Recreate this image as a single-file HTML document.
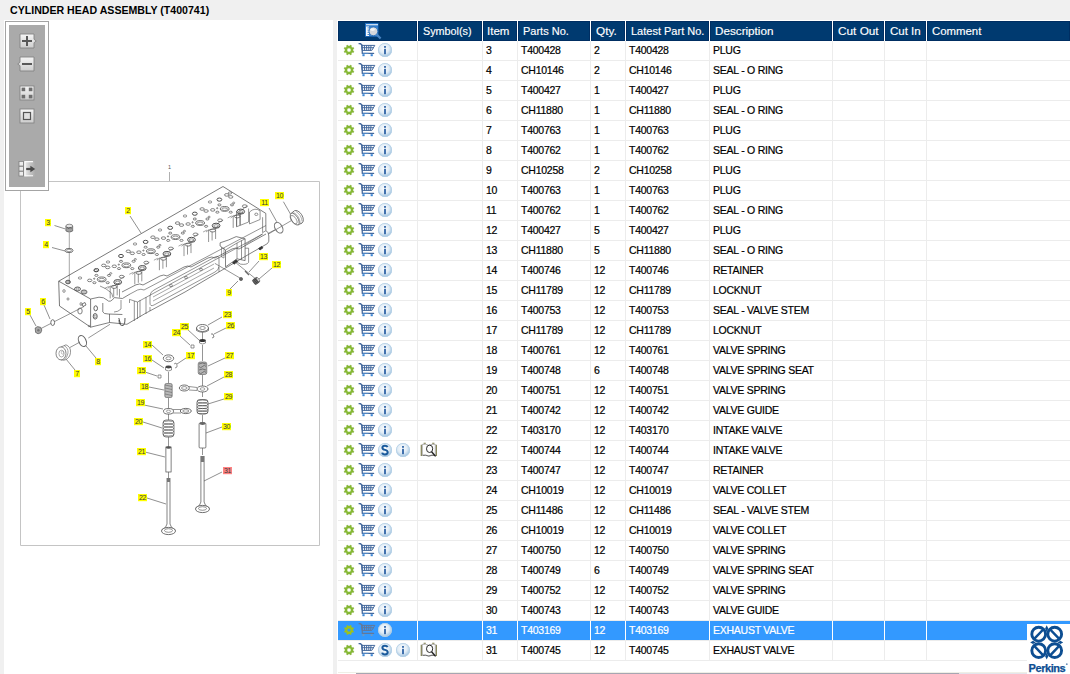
<!DOCTYPE html><html><head><meta charset="utf-8"><style>
*{margin:0;padding:0;box-sizing:border-box}
html,body{width:1070px;height:674px;overflow:hidden;background:#f0f0f0;font-family:"Liberation Sans",sans-serif;position:relative}
.a{position:absolute}
#title{left:10px;top:2px;font-weight:bold;font-size:10.6px;line-height:16px;color:#000;white-space:nowrap}
#lp{left:4px;top:20px;width:329px;height:654px;background:#fff}
#rp{left:337px;top:20px;width:733px;height:654px;background:#fff}
.hd{-webkit-text-stroke:0.15px #fff;top:21px;height:20px;background:#003a70;box-shadow:inset 0 0 0 1px #002e62;color:#fff;font-size:10.8px;line-height:20px;padding-left:5px;white-space:nowrap}
.vl{top:41px;width:1px;height:620px;background:#ececec}
.hl{left:338px;width:732px;height:1px;background:#ececec}
.tx{font-size:10.5px;letter-spacing:-0.25px;-webkit-text-stroke:0.2px currentColor;line-height:19px;height:19px;color:#000;white-space:nowrap}
.sel{left:338px;width:732px;height:19px;background:#3399ff}
.ic{width:16px;height:16px}
</style></head><body>
<div class="a" id="title">CYLINDER HEAD ASSEMBLY (T400741)</div>
<div class="a" id="lp"></div>
<div class="a" id="rp"></div>
<svg class="a" style="left:0;top:0" width="333" height="674" viewBox="0 0 333 674"><path d="M49,181.5 H319.5 V545.5 H20.5 V191" stroke="#c4c4c4" stroke-width="1" fill="none"/>
<path d="M169.5,172 L169.5,181" stroke="#b0b0b0" stroke-width="1" fill="none"/>
<text x="169.5" y="168.5" font-size="5.5" text-anchor="middle" fill="#555" font-family="Liberation Sans">1</text>
<path d="M130,216 L141,233" stroke="#606060" stroke-width="0.7" fill="none"/>
<path d="M54.5,225.5 L65.5,229" stroke="#606060" stroke-width="0.7" fill="none"/>
<path d="M52,247.5 L65,251" stroke="#606060" stroke-width="0.7" fill="none"/>
<path d="M283.4,201.7 L290.7,214.4" stroke="#606060" stroke-width="0.7" fill="none"/>
<path d="M269,208 L276.7,221.7" stroke="#606060" stroke-width="0.7" fill="none"/>
<path d="M259,261 L249,272" stroke="#606060" stroke-width="0.7" fill="none"/>
<path d="M272,268 L259,279" stroke="#606060" stroke-width="0.7" fill="none"/>
<path d="M230,289 L238,281" stroke="#606060" stroke-width="0.7" fill="none"/>
<path d="M44,305 L50,319" stroke="#606060" stroke-width="0.7" fill="none"/>
<path d="M30,315 L36,326" stroke="#606060" stroke-width="0.7" fill="none"/>
<path d="M96,358 L86,346" stroke="#606060" stroke-width="0.7" fill="none"/>
<path d="M75,370 L66,359" stroke="#606060" stroke-width="0.7" fill="none"/>
<path d="M152,345 L163,355" stroke="#606060" stroke-width="0.7" fill="none"/>
<path d="M152,360 L164,368" stroke="#606060" stroke-width="0.7" fill="none"/>
<path d="M145,372 L157,376" stroke="#606060" stroke-width="0.7" fill="none"/>
<path d="M180,336 L190,345" stroke="#606060" stroke-width="0.7" fill="none"/>
<path d="M222,317 L208,325" stroke="#606060" stroke-width="0.7" fill="none"/>
<path d="M226,328 L214,334" stroke="#606060" stroke-width="0.7" fill="none"/>
<path d="M187,329 L199,340" stroke="#606060" stroke-width="0.7" fill="none"/>
<path d="M186,358 L177,364" stroke="#606060" stroke-width="0.7" fill="none"/>
<path d="M225,358 L208,366" stroke="#606060" stroke-width="0.7" fill="none"/>
<path d="M224,377 L207,386" stroke="#606060" stroke-width="0.7" fill="none"/>
<path d="M224,399 L208,404" stroke="#606060" stroke-width="0.7" fill="none"/>
<path d="M149,387 L164,390" stroke="#606060" stroke-width="0.7" fill="none"/>
<path d="M144,405 L163,409" stroke="#606060" stroke-width="0.7" fill="none"/>
<path d="M143,422 L162,428" stroke="#606060" stroke-width="0.7" fill="none"/>
<path d="M145,452 L165,457" stroke="#606060" stroke-width="0.7" fill="none"/>
<path d="M147,498 L166,504" stroke="#606060" stroke-width="0.7" fill="none"/>
<path d="M222,427 L206,433" stroke="#606060" stroke-width="0.7" fill="none"/>
<path d="M222,472 L204,481" stroke="#606060" stroke-width="0.7" fill="none"/>
<path d="M58.7,281.2 L223,186.5 L265.8,213.4" stroke="#4e4e4e" stroke-width="0.75" fill="none"/>
<path d="M58.7,281.2 L90.6,299" stroke="#4e4e4e" stroke-width="0.75" fill="none"/>
<path d="M58.7,281.2 L59.5,306 L90.6,327.2 L90.6,299" stroke="#4e4e4e" stroke-width="0.75" fill="none"/>
<path d="M90.6,299 L99,297.2 Q104,297 107,300 Q110,303.5 114.4,297.6 L122.4,298.5 L130,294" stroke="#4e4e4e" stroke-width="0.7" fill="none"/>
<path d="M122,292 L136,284.8 Q140,283 143,285 L160,276 Q164,274 167,276 L184,267 Q188,265 191,267 L208,258 Q212,256 215,258 L232,249 Q236,247 239,249 L266,234" stroke="#4e4e4e" stroke-width="0.7" fill="none"/>
<path d="M130,294 L137.5,290 Q141,288.5 144,290 L266,225.5" stroke="#4e4e4e" stroke-width="0.6" fill="none"/>
<path d="M137.5,302 L262.6,234" stroke="#4e4e4e" stroke-width="0.6" fill="none"/>
<path d="M100,286 Q106,288 111.7,293.2 L113,297.6 M119.5,297.5 L119.5,289" stroke="#4e4e4e" stroke-width="0.6" fill="none"/>
<path d="M265.8,213.4 L265.9,230.7 Q269,232 268.8,236 L268.8,241.3 Q268,244 265,245 L248.6,254.4" stroke="#4e4e4e" stroke-width="0.7" fill="none"/>
<path d="M262.6,217.2 L262.6,232.6 L265.9,230.7 M246,244.1 L262.6,234" stroke="#4e4e4e" stroke-width="0.6" fill="none"/>
<path d="M267.9,233.6 L275,229.7" stroke="#4e4e4e" stroke-width="0.6" fill="none"/>
<path d="M258.6,248.6 l3,-2.2 l1.4,1.4 l-3,2.2 Z" fill="#333" stroke="#333" stroke-width="0.8"/>
<path d="M145,313.6 L185,292 L248.6,254.4" stroke="#4e4e4e" stroke-width="0.7" fill="none"/>
<path d="M102.8,303 L102.8,311.9 Q103.5,314 108.2,314 L122.4,314.5" stroke="#4e4e4e" stroke-width="0.7" fill="none"/>
<path d="M109.5,314 L109.5,322.5 M90.6,327.2 L109.5,322.5 L126.9,324.3 L145,313.6" stroke="#4e4e4e" stroke-width="0.7" fill="none"/>
<path d="M121,300 L121,309 Q118,312 114,312" stroke="#4e4e4e" stroke-width="0.6" fill="none"/>
<path d="M129.5,299.4 L137.5,302 L137.5,319 M134.3,301 L134.3,321 M129.5,299.4 L129.5,303" stroke="#4e4e4e" stroke-width="0.6" fill="none"/>
<path d="M119,320 Q119,326 123,325.5 Q125,325 125,318 M118.8,318 L120.5,324" stroke="#444" stroke-width="0.9" fill="none"/>
<path d="M150,296 Q150,292 154,290 L215,257 Q219,255 219,259 L219,266 Q219,270 215,272 L154,305 Q150,307 150,303 Z" stroke="#4e4e4e" stroke-width="0.6" fill="none"/>
<path d="M153,297 L214,264 M153,301 L214,268" stroke="#4e4e4e" stroke-width="0.5" fill="none"/>
<path d="M140,300 L140,317 M146,297 L146,314" stroke="#4e4e4e" stroke-width="0.6" fill="none"/>
<ellipse cx="171" cy="285.6" rx="1.6" ry="1" stroke="#4e4e4e" stroke-width="0.6" fill="none"/>
<ellipse cx="186" cy="277.5" rx="1.6" ry="1" stroke="#4e4e4e" stroke-width="0.6" fill="none"/>
<ellipse cx="201" cy="269.4" rx="1.6" ry="1" stroke="#4e4e4e" stroke-width="0.6" fill="none"/>
<path d="M150,311 L150,307 M219,272 L219,267" stroke="#4e4e4e" stroke-width="0.6" fill="none"/>
<path d="M220.1,242.8 L228.2,240.1 L236.2,236.6 L245.1,238.8 L245.1,260.6 L237,258.8 L225.5,266.9 L225.5,250 L220.1,246 Z" stroke="#4e4e4e" stroke-width="0.7" fill="none"/>
<path d="M225.5,250 L237,243 L245.1,238.8 M237,243 L237,258.8 M241.5,240.5 L241.5,259.5" stroke="#4e4e4e" stroke-width="0.6" fill="none"/>
<path d="M245.1,248.2 L248.6,248.2 L248.6,262.4 Q247,265 240.6,264.2 L237,262" stroke="#4e4e4e" stroke-width="0.6" fill="none"/>
<path d="M221.5,247 L221.5,257 L224,258 L224,248" stroke="#4e4e4e" stroke-width="0.5" fill="none"/>
<path d="M232.6,262.6 l3.6,-2.8 l1.4,1.6 l-3.6,2.8 Z" fill="#333" stroke="#333" stroke-width="0.9"/>
<path d="M234.4,261.5 L258.4,281.1" stroke="#4e4e4e" stroke-width="0.6" fill="none"/>
<path d="M214.8,263.3 L240.6,278.4" stroke="#4e4e4e" stroke-width="0.6" fill="none"/>
<path d="M236.5,211 L236.5,226.8 L248.6,222 L248.6,208.5 M240,209.5 L240,225.5" stroke="#4e4e4e" stroke-width="0.6" fill="none"/>
<path d="M249.5,212 L249.5,223.9 L260.1,219.5 L260.1,210.9 Q255,207 249.5,212" stroke="#4e4e4e" stroke-width="0.6" fill="none"/>
<ellipse cx="256.3" cy="214.3" rx="1.6" ry="1.2" stroke="#4e4e4e" stroke-width="0.6" fill="none"/>
<ellipse cx="64" cy="291" rx="1.2" ry="1.4" stroke="#4e4e4e" stroke-width="0.6" fill="none"/>
<ellipse cx="68" cy="299" rx="1" ry="1.2" stroke="#4e4e4e" stroke-width="0.6" fill="none"/>
<ellipse cx="80" cy="311" rx="2.2" ry="3" stroke="#4e4e4e" stroke-width="0.7" fill="none"/>
<ellipse cx="81" cy="304" rx="1" ry="1.5" stroke="#4e4e4e" stroke-width="0.6" fill="none"/>
<ellipse cx="95.7" cy="308.3" rx="1.8" ry="2.5" stroke="#4e4e4e" stroke-width="0.9" fill="none"/>
<ellipse cx="95.2" cy="316.3" rx="2" ry="2.8" stroke="#4e4e4e" stroke-width="0.9" fill="none"/>
<ellipse cx="95.2" cy="316.3" rx="1" ry="1.5" stroke="#4e4e4e" stroke-width="0.5" fill="none"/>
<ellipse cx="89" cy="326" rx="0.8" ry="0.8" stroke="#4e4e4e" stroke-width="0.5" fill="none"/>
<ellipse cx="77.5" cy="289" rx="3" ry="2" stroke="#4e4e4e" stroke-width="0.9" fill="none"/>
<ellipse cx="84" cy="292" rx="3" ry="2" stroke="#4e4e4e" stroke-width="0.9" fill="none"/>
<ellipse cx="77.5" cy="289" rx="1.6" ry="1" stroke="#4e4e4e" stroke-width="0.5" fill="none"/>
<ellipse cx="84" cy="292" rx="1.6" ry="1" stroke="#4e4e4e" stroke-width="0.5" fill="none"/>
<ellipse cx="68" cy="282" rx="2.4" ry="1.8" stroke="#4e4e4e" stroke-width="0.9" fill="#bbb"/>
<ellipse cx="101.7" cy="279.4" rx="4.4" ry="2.4" stroke="#4e4e4e" stroke-width="0.8" fill="none"/>
<ellipse cx="101.7" cy="279.7" rx="3" ry="1.3" stroke="#4e4e4e" stroke-width="0.6" fill="none"/>
<ellipse cx="96.4" cy="275.4" rx="1.6" ry="1" stroke="#4e4e4e" stroke-width="0.7" fill="none"/>
<ellipse cx="109.0" cy="275.4" rx="1.6" ry="1" stroke="#4e4e4e" stroke-width="0.7" fill="none"/>
<ellipse cx="94.4" cy="282.7" rx="1.6" ry="1" stroke="#4e4e4e" stroke-width="0.7" fill="none"/>
<ellipse cx="107.7" cy="282.7" rx="1.6" ry="1" stroke="#4e4e4e" stroke-width="0.7" fill="none"/>
<ellipse cx="94.2" cy="278.7" rx="0.6" ry="0.6" stroke="#4e4e4e" stroke-width="0.7" fill="none"/>
<ellipse cx="96.4" cy="270.09999999999997" rx="2.4" ry="1.6" stroke="#4e4e4e" stroke-width="1.0" fill="none"/>
<ellipse cx="103.7" cy="265.4" rx="2.2" ry="1.3" stroke="#4e4e4e" stroke-width="0.7" fill="none"/>
<ellipse cx="107.7" cy="267.4" rx="2.2" ry="1.3" stroke="#4e4e4e" stroke-width="0.7" fill="none"/>
<ellipse cx="117.7" cy="282.09999999999997" rx="3.9" ry="2.5" stroke="#4e4e4e" stroke-width="1.0" fill="none"/>
<ellipse cx="117.7" cy="282.4" rx="2.4" ry="1.3" stroke="#4e4e4e" stroke-width="0.6" fill="none"/>
<ellipse cx="121.7" cy="276.7" rx="2.4" ry="1.4" stroke="#4e4e4e" stroke-width="0.7" fill="none"/>
<ellipse cx="89.7" cy="280.4" rx="2.2" ry="1.3" stroke="#4e4e4e" stroke-width="0.7" fill="none"/>
<ellipse cx="110.7" cy="273.4" rx="1.1" ry="0.8" stroke="#4e4e4e" stroke-width="0.6" fill="none"/>
<path d="M110.2,286.4 L110.2,298.4 M117.2,284.4 L117.2,295.4 M113.7,287.9 L113.7,296.9" stroke="#4e4e4e" stroke-width="0.6" fill="none"/>
<path d="M107.7,288.4 Q109.7,285.4 113.7,285.9 L119.7,282.9" stroke="#4e4e4e" stroke-width="0.6" fill="none"/>
<ellipse cx="114.2" cy="286.9" rx="2.8" ry="1.5" stroke="#4e4e4e" stroke-width="0.7" fill="none"/>
<path d="M104.7,288.4 L108.7,286.4 M119.7,279.4 L124.7,276.4" stroke="#4e4e4e" stroke-width="0.5" fill="none"/>
<ellipse cx="126.30000000000001" cy="265.29999999999995" rx="4.4" ry="2.4" stroke="#4e4e4e" stroke-width="0.8" fill="none"/>
<ellipse cx="126.30000000000001" cy="265.59999999999997" rx="3" ry="1.3" stroke="#4e4e4e" stroke-width="0.6" fill="none"/>
<ellipse cx="121.00000000000001" cy="261.29999999999995" rx="1.6" ry="1" stroke="#4e4e4e" stroke-width="0.7" fill="none"/>
<ellipse cx="133.60000000000002" cy="261.29999999999995" rx="1.6" ry="1" stroke="#4e4e4e" stroke-width="0.7" fill="none"/>
<ellipse cx="119.00000000000001" cy="268.59999999999997" rx="1.6" ry="1" stroke="#4e4e4e" stroke-width="0.7" fill="none"/>
<ellipse cx="132.3" cy="268.59999999999997" rx="1.6" ry="1" stroke="#4e4e4e" stroke-width="0.7" fill="none"/>
<ellipse cx="118.80000000000001" cy="264.59999999999997" rx="0.6" ry="0.6" stroke="#4e4e4e" stroke-width="0.7" fill="none"/>
<ellipse cx="121.00000000000001" cy="255.99999999999994" rx="2.4" ry="1.6" stroke="#4e4e4e" stroke-width="1.0" fill="none"/>
<ellipse cx="128.3" cy="251.29999999999995" rx="2.2" ry="1.3" stroke="#4e4e4e" stroke-width="0.7" fill="none"/>
<ellipse cx="132.3" cy="253.29999999999995" rx="2.2" ry="1.3" stroke="#4e4e4e" stroke-width="0.7" fill="none"/>
<ellipse cx="142.3" cy="267.99999999999994" rx="3.9" ry="2.5" stroke="#4e4e4e" stroke-width="1.0" fill="none"/>
<ellipse cx="142.3" cy="268.29999999999995" rx="2.4" ry="1.3" stroke="#4e4e4e" stroke-width="0.6" fill="none"/>
<ellipse cx="146.3" cy="262.59999999999997" rx="2.4" ry="1.4" stroke="#4e4e4e" stroke-width="0.7" fill="none"/>
<ellipse cx="114.30000000000001" cy="266.29999999999995" rx="2.2" ry="1.3" stroke="#4e4e4e" stroke-width="0.7" fill="none"/>
<ellipse cx="135.3" cy="259.29999999999995" rx="1.1" ry="0.8" stroke="#4e4e4e" stroke-width="0.6" fill="none"/>
<path d="M134.8,272.29999999999995 L134.8,284.29999999999995 M141.8,270.29999999999995 L141.8,281.29999999999995 M138.3,273.79999999999995 L138.3,282.79999999999995" stroke="#4e4e4e" stroke-width="0.6" fill="none"/>
<path d="M132.3,274.29999999999995 Q134.3,271.29999999999995 138.3,271.79999999999995 L144.3,268.79999999999995" stroke="#4e4e4e" stroke-width="0.6" fill="none"/>
<ellipse cx="138.8" cy="272.79999999999995" rx="2.8" ry="1.5" stroke="#4e4e4e" stroke-width="0.7" fill="none"/>
<path d="M129.3,274.29999999999995 L133.3,272.29999999999995 M144.3,265.29999999999995 L149.3,262.29999999999995" stroke="#4e4e4e" stroke-width="0.5" fill="none"/>
<ellipse cx="150.9" cy="251.2" rx="4.4" ry="2.4" stroke="#4e4e4e" stroke-width="0.8" fill="none"/>
<ellipse cx="150.9" cy="251.5" rx="3" ry="1.3" stroke="#4e4e4e" stroke-width="0.6" fill="none"/>
<ellipse cx="145.6" cy="247.2" rx="1.6" ry="1" stroke="#4e4e4e" stroke-width="0.7" fill="none"/>
<ellipse cx="158.20000000000002" cy="247.2" rx="1.6" ry="1" stroke="#4e4e4e" stroke-width="0.7" fill="none"/>
<ellipse cx="143.6" cy="254.5" rx="1.6" ry="1" stroke="#4e4e4e" stroke-width="0.7" fill="none"/>
<ellipse cx="156.9" cy="254.5" rx="1.6" ry="1" stroke="#4e4e4e" stroke-width="0.7" fill="none"/>
<ellipse cx="143.4" cy="250.5" rx="0.6" ry="0.6" stroke="#4e4e4e" stroke-width="0.7" fill="none"/>
<ellipse cx="145.6" cy="241.89999999999998" rx="2.4" ry="1.6" stroke="#4e4e4e" stroke-width="1.0" fill="none"/>
<ellipse cx="152.9" cy="237.2" rx="2.2" ry="1.3" stroke="#4e4e4e" stroke-width="0.7" fill="none"/>
<ellipse cx="156.9" cy="239.2" rx="2.2" ry="1.3" stroke="#4e4e4e" stroke-width="0.7" fill="none"/>
<ellipse cx="166.9" cy="253.89999999999998" rx="3.9" ry="2.5" stroke="#4e4e4e" stroke-width="1.0" fill="none"/>
<ellipse cx="166.9" cy="254.2" rx="2.4" ry="1.3" stroke="#4e4e4e" stroke-width="0.6" fill="none"/>
<ellipse cx="170.9" cy="248.5" rx="2.4" ry="1.4" stroke="#4e4e4e" stroke-width="0.7" fill="none"/>
<ellipse cx="138.9" cy="252.2" rx="2.2" ry="1.3" stroke="#4e4e4e" stroke-width="0.7" fill="none"/>
<ellipse cx="159.9" cy="245.2" rx="1.1" ry="0.8" stroke="#4e4e4e" stroke-width="0.6" fill="none"/>
<path d="M159.4,258.2 L159.4,270.2 M166.4,256.2 L166.4,267.2 M162.9,259.7 L162.9,268.7" stroke="#4e4e4e" stroke-width="0.6" fill="none"/>
<path d="M156.9,260.2 Q158.9,257.2 162.9,257.7 L168.9,254.7" stroke="#4e4e4e" stroke-width="0.6" fill="none"/>
<ellipse cx="163.4" cy="258.7" rx="2.8" ry="1.5" stroke="#4e4e4e" stroke-width="0.7" fill="none"/>
<path d="M153.9,260.2 L157.9,258.2 M168.9,251.2 L173.9,248.2" stroke="#4e4e4e" stroke-width="0.5" fill="none"/>
<ellipse cx="175.5" cy="237.09999999999997" rx="4.4" ry="2.4" stroke="#4e4e4e" stroke-width="0.8" fill="none"/>
<ellipse cx="175.5" cy="237.39999999999998" rx="3" ry="1.3" stroke="#4e4e4e" stroke-width="0.6" fill="none"/>
<ellipse cx="170.2" cy="233.09999999999997" rx="1.6" ry="1" stroke="#4e4e4e" stroke-width="0.7" fill="none"/>
<ellipse cx="182.8" cy="233.09999999999997" rx="1.6" ry="1" stroke="#4e4e4e" stroke-width="0.7" fill="none"/>
<ellipse cx="168.2" cy="240.39999999999998" rx="1.6" ry="1" stroke="#4e4e4e" stroke-width="0.7" fill="none"/>
<ellipse cx="181.5" cy="240.39999999999998" rx="1.6" ry="1" stroke="#4e4e4e" stroke-width="0.7" fill="none"/>
<ellipse cx="168.0" cy="236.39999999999998" rx="0.6" ry="0.6" stroke="#4e4e4e" stroke-width="0.7" fill="none"/>
<ellipse cx="170.2" cy="227.79999999999995" rx="2.4" ry="1.6" stroke="#4e4e4e" stroke-width="1.0" fill="none"/>
<ellipse cx="177.5" cy="223.09999999999997" rx="2.2" ry="1.3" stroke="#4e4e4e" stroke-width="0.7" fill="none"/>
<ellipse cx="181.5" cy="225.09999999999997" rx="2.2" ry="1.3" stroke="#4e4e4e" stroke-width="0.7" fill="none"/>
<ellipse cx="191.5" cy="239.79999999999995" rx="3.9" ry="2.5" stroke="#4e4e4e" stroke-width="1.0" fill="none"/>
<ellipse cx="191.5" cy="240.09999999999997" rx="2.4" ry="1.3" stroke="#4e4e4e" stroke-width="0.6" fill="none"/>
<ellipse cx="195.5" cy="234.39999999999998" rx="2.4" ry="1.4" stroke="#4e4e4e" stroke-width="0.7" fill="none"/>
<ellipse cx="163.5" cy="238.09999999999997" rx="2.2" ry="1.3" stroke="#4e4e4e" stroke-width="0.7" fill="none"/>
<ellipse cx="184.5" cy="231.09999999999997" rx="1.1" ry="0.8" stroke="#4e4e4e" stroke-width="0.6" fill="none"/>
<path d="M184.0,244.09999999999997 L184.0,256.09999999999997 M191.0,242.09999999999997 L191.0,253.09999999999997 M187.5,245.59999999999997 L187.5,254.59999999999997" stroke="#4e4e4e" stroke-width="0.6" fill="none"/>
<path d="M181.5,246.09999999999997 Q183.5,243.09999999999997 187.5,243.59999999999997 L193.5,240.59999999999997" stroke="#4e4e4e" stroke-width="0.6" fill="none"/>
<ellipse cx="188.0" cy="244.59999999999997" rx="2.8" ry="1.5" stroke="#4e4e4e" stroke-width="0.7" fill="none"/>
<path d="M178.5,246.09999999999997 L182.5,244.09999999999997 M193.5,237.09999999999997 L198.5,234.09999999999997" stroke="#4e4e4e" stroke-width="0.5" fill="none"/>
<ellipse cx="200.10000000000002" cy="222.99999999999997" rx="4.4" ry="2.4" stroke="#4e4e4e" stroke-width="0.8" fill="none"/>
<ellipse cx="200.10000000000002" cy="223.29999999999998" rx="3" ry="1.3" stroke="#4e4e4e" stroke-width="0.6" fill="none"/>
<ellipse cx="194.8" cy="218.99999999999997" rx="1.6" ry="1" stroke="#4e4e4e" stroke-width="0.7" fill="none"/>
<ellipse cx="207.40000000000003" cy="218.99999999999997" rx="1.6" ry="1" stroke="#4e4e4e" stroke-width="0.7" fill="none"/>
<ellipse cx="192.8" cy="226.29999999999998" rx="1.6" ry="1" stroke="#4e4e4e" stroke-width="0.7" fill="none"/>
<ellipse cx="206.10000000000002" cy="226.29999999999998" rx="1.6" ry="1" stroke="#4e4e4e" stroke-width="0.7" fill="none"/>
<ellipse cx="192.60000000000002" cy="222.29999999999998" rx="0.6" ry="0.6" stroke="#4e4e4e" stroke-width="0.7" fill="none"/>
<ellipse cx="194.8" cy="213.69999999999996" rx="2.4" ry="1.6" stroke="#4e4e4e" stroke-width="1.0" fill="none"/>
<ellipse cx="202.10000000000002" cy="208.99999999999997" rx="2.2" ry="1.3" stroke="#4e4e4e" stroke-width="0.7" fill="none"/>
<ellipse cx="206.10000000000002" cy="210.99999999999997" rx="2.2" ry="1.3" stroke="#4e4e4e" stroke-width="0.7" fill="none"/>
<ellipse cx="216.10000000000002" cy="225.69999999999996" rx="3.9" ry="2.5" stroke="#4e4e4e" stroke-width="1.0" fill="none"/>
<ellipse cx="216.10000000000002" cy="225.99999999999997" rx="2.4" ry="1.3" stroke="#4e4e4e" stroke-width="0.6" fill="none"/>
<ellipse cx="220.10000000000002" cy="220.29999999999998" rx="2.4" ry="1.4" stroke="#4e4e4e" stroke-width="0.7" fill="none"/>
<ellipse cx="188.10000000000002" cy="223.99999999999997" rx="2.2" ry="1.3" stroke="#4e4e4e" stroke-width="0.7" fill="none"/>
<ellipse cx="209.10000000000002" cy="216.99999999999997" rx="1.1" ry="0.8" stroke="#4e4e4e" stroke-width="0.6" fill="none"/>
<path d="M208.60000000000002,229.99999999999997 L208.60000000000002,241.99999999999997 M215.60000000000002,227.99999999999997 L215.60000000000002,238.99999999999997 M212.10000000000002,231.49999999999997 L212.10000000000002,240.49999999999997" stroke="#4e4e4e" stroke-width="0.6" fill="none"/>
<path d="M206.10000000000002,231.99999999999997 Q208.10000000000002,228.99999999999997 212.10000000000002,229.49999999999997 L218.10000000000002,226.49999999999997" stroke="#4e4e4e" stroke-width="0.6" fill="none"/>
<ellipse cx="212.60000000000002" cy="230.49999999999997" rx="2.8" ry="1.5" stroke="#4e4e4e" stroke-width="0.7" fill="none"/>
<path d="M203.10000000000002,231.99999999999997 L207.10000000000002,229.99999999999997 M218.10000000000002,222.99999999999997 L223.10000000000002,219.99999999999997" stroke="#4e4e4e" stroke-width="0.5" fill="none"/>
<ellipse cx="224.7" cy="208.89999999999998" rx="4.4" ry="2.4" stroke="#4e4e4e" stroke-width="0.8" fill="none"/>
<ellipse cx="224.7" cy="209.2" rx="3" ry="1.3" stroke="#4e4e4e" stroke-width="0.6" fill="none"/>
<ellipse cx="219.39999999999998" cy="204.89999999999998" rx="1.6" ry="1" stroke="#4e4e4e" stroke-width="0.7" fill="none"/>
<ellipse cx="232.0" cy="204.89999999999998" rx="1.6" ry="1" stroke="#4e4e4e" stroke-width="0.7" fill="none"/>
<ellipse cx="217.39999999999998" cy="212.2" rx="1.6" ry="1" stroke="#4e4e4e" stroke-width="0.7" fill="none"/>
<ellipse cx="230.7" cy="212.2" rx="1.6" ry="1" stroke="#4e4e4e" stroke-width="0.7" fill="none"/>
<ellipse cx="217.2" cy="208.2" rx="0.6" ry="0.6" stroke="#4e4e4e" stroke-width="0.7" fill="none"/>
<ellipse cx="219.39999999999998" cy="199.59999999999997" rx="2.4" ry="1.6" stroke="#4e4e4e" stroke-width="1.0" fill="none"/>
<ellipse cx="226.7" cy="194.89999999999998" rx="2.2" ry="1.3" stroke="#4e4e4e" stroke-width="0.7" fill="none"/>
<ellipse cx="230.7" cy="196.89999999999998" rx="2.2" ry="1.3" stroke="#4e4e4e" stroke-width="0.7" fill="none"/>
<ellipse cx="240.7" cy="211.59999999999997" rx="3.9" ry="2.5" stroke="#4e4e4e" stroke-width="1.0" fill="none"/>
<ellipse cx="240.7" cy="211.89999999999998" rx="2.4" ry="1.3" stroke="#4e4e4e" stroke-width="0.6" fill="none"/>
<ellipse cx="244.7" cy="206.2" rx="2.4" ry="1.4" stroke="#4e4e4e" stroke-width="0.7" fill="none"/>
<ellipse cx="212.7" cy="209.89999999999998" rx="2.2" ry="1.3" stroke="#4e4e4e" stroke-width="0.7" fill="none"/>
<ellipse cx="233.7" cy="202.89999999999998" rx="1.1" ry="0.8" stroke="#4e4e4e" stroke-width="0.6" fill="none"/>
<path d="M233.2,215.89999999999998 L233.2,227.89999999999998 M240.2,213.89999999999998 L240.2,224.89999999999998 M236.7,217.39999999999998 L236.7,226.39999999999998" stroke="#4e4e4e" stroke-width="0.6" fill="none"/>
<path d="M230.7,217.89999999999998 Q232.7,214.89999999999998 236.7,215.39999999999998 L242.7,212.39999999999998" stroke="#4e4e4e" stroke-width="0.6" fill="none"/>
<ellipse cx="237.2" cy="216.39999999999998" rx="2.8" ry="1.5" stroke="#4e4e4e" stroke-width="0.7" fill="none"/>
<path d="M227.7,217.89999999999998 L231.7,215.89999999999998 M242.7,208.89999999999998 L247.7,205.89999999999998" stroke="#4e4e4e" stroke-width="0.5" fill="none"/>
<ellipse cx="95.7" cy="270.7" rx="1.8" ry="1.1" stroke="#4e4e4e" stroke-width="0.6" fill="none"/>
<ellipse cx="160" cy="230" rx="1.8" ry="1.1" stroke="#4e4e4e" stroke-width="0.6" fill="none"/>
<ellipse cx="185" cy="216" rx="1.8" ry="1.1" stroke="#4e4e4e" stroke-width="0.6" fill="none"/>
<ellipse cx="210" cy="202" rx="1.8" ry="1.1" stroke="#4e4e4e" stroke-width="0.6" fill="none"/>
<ellipse cx="80" cy="278" rx="1.8" ry="1.1" stroke="#4e4e4e" stroke-width="0.6" fill="none"/>
<ellipse cx="135" cy="244" rx="1.8" ry="1.1" stroke="#4e4e4e" stroke-width="0.6" fill="none"/>
<ellipse cx="230" cy="193" rx="1.8" ry="1.1" stroke="#4e4e4e" stroke-width="0.6" fill="none"/>
<ellipse cx="108" cy="262" rx="1.8" ry="1.1" stroke="#4e4e4e" stroke-width="0.6" fill="none"/>
<path d="M69.3,233 L69.3,283" stroke="#4e4e4e" stroke-width="0.5" fill="none"/>
<path d="M65.9,226 L72.7,226 L72.7,231 Q69.3,233.5 65.9,231 Z" fill="#a0a0a0" stroke="#4e4e4e" stroke-width="0.6"/>
<ellipse cx="69.3" cy="226" rx="3.4" ry="1.8" stroke="#4e4e4e" stroke-width="0.6" fill="#e4e4e4"/>
<path d="M67,227 L68.5,229 L70,227 L71.5,229" stroke="#444" stroke-width="0.5" fill="none"/>
<ellipse cx="69" cy="250.5" rx="4" ry="2.1" stroke="#4e4e4e" stroke-width="0.8" fill="#fff"/>
<ellipse cx="69" cy="250.5" rx="2.4" ry="1.1" stroke="#4e4e4e" stroke-width="0.5" fill="none"/>
<path d="M269,233.7 L291.7,220.4" stroke="#4e4e4e" stroke-width="0.6" fill="none"/>
<g transform="rotate(-30 278.7 227.7)"><ellipse cx="278.7" cy="227.7" rx="3.6" ry="5.8" fill="none" stroke="#777" stroke-width="1.1"/></g>
<g transform="rotate(-32 296 218.3)"><ellipse cx="298.5" cy="218.3" rx="4.2" ry="7.2" fill="#fff" stroke="#666" stroke-width="0.8"/><path d="M298.5,211.1 L294.5,211.6 Q290.6,218.3 294.5,225 L298.5,225.5" fill="#fff" stroke="#666" stroke-width="0.8"/><ellipse cx="294.5" cy="218.3" rx="3.2" ry="6.7" fill="#fff" stroke="#666" stroke-width="0.8"/><ellipse cx="293.3" cy="218.3" rx="2.4" ry="4.8" fill="none" stroke="#777" stroke-width="0.7"/><path d="M297,212 Q300.5,218.3 297,224.6 M299.5,212.3 Q302.5,218.3 299.5,224.3" fill="none" stroke="#888" stroke-width="0.6"/></g>
<g transform="rotate(-35 256 281)"><rect x="253.2" y="278.2" width="5.6" height="5.6" rx="1.2" fill="#6a6a6a" stroke="#333" stroke-width="0.6"/><path d="M254,279.5 h4 M254,281 h4 M254,282.5 h4" stroke="#222" stroke-width="0.5"/><ellipse cx="258.5" cy="281" rx="1" ry="2.6" fill="#ddd" stroke="#444" stroke-width="0.5"/></g>
<path d="M245,271 L249,275" stroke="#666" stroke-width="1.2" fill="none"/>
<ellipse cx="241" cy="279" rx="1.6" ry="1.6" stroke="#444" stroke-width="0.6" fill="#666"/>
<path d="M41,328.5 L84,306.5" stroke="#4e4e4e" stroke-width="0.6" fill="none"/>
<path d="M35.2,328 L37.5,326.6 L40.6,327.3 L41.8,330 L40.8,332.8 L38,333.8 L35.6,332.4 Z" fill="#a8a8a8" stroke="#555" stroke-width="0.7"/><circle cx="38.4" cy="330.2" r="1.2" fill="#777"/>
<ellipse cx="52.7" cy="322.6" rx="1.9" ry="2.9" stroke="#4e4e4e" stroke-width="0.8" fill="#fff"/>
<path d="M82,304 l3,-1.5 l1,2.5 l-3,1.5 Z" stroke="#444" stroke-width="0.7" fill="none"/>
<path d="M69.9,347.5 L80,342" stroke="#4e4e4e" stroke-width="0.6" fill="none"/>
<path d="M88.3,338 L110,324.3" stroke="#4e4e4e" stroke-width="0.6" fill="none"/>
<g transform="rotate(-25 82.4 341)"><ellipse cx="82.4" cy="341" rx="3.6" ry="5.8" fill="none" stroke="#666" stroke-width="1.1"/></g>
<path d="M61,347 L66,344.8 Q71,347 70.5,352.5 Q70,358 65,360 L61,360 Z" fill="#fff" stroke="#666" stroke-width="0.7"/>
<path d="M64,345.5 Q68.5,348 68,353 Q67.5,358 63.5,360" fill="none" stroke="#666" stroke-width="0.6"/>
<ellipse cx="61" cy="353.4" rx="5" ry="6.5" stroke="#666" stroke-width="0.8" fill="#fff"/>
<ellipse cx="61.5" cy="353.6" rx="2.6" ry="3.4" stroke="#777" stroke-width="0.6" fill="none"/>
<ellipse cx="62.5" cy="352.5" rx="1.2" ry="1.6" stroke="#888" stroke-width="0.5" fill="none"/>
<path d="M168.5,372 L168.5,383" stroke="#4e4e4e" stroke-width="0.6" fill="none"/>
<path d="M168.5,398 L168.5,420" stroke="#4e4e4e" stroke-width="0.6" fill="none"/>
<path d="M168.5,437 L168.5,447" stroke="#4e4e4e" stroke-width="0.6" fill="none"/>
<path d="M168.5,472 L168.5,478" stroke="#4e4e4e" stroke-width="0.6" fill="none"/>
<ellipse cx="168.5" cy="358.3" rx="5.2" ry="3.4" stroke="#4e4e4e" stroke-width="0.8" fill="#fff"/>
<ellipse cx="168.5" cy="358.3" rx="2.6" ry="1.5" stroke="#4e4e4e" stroke-width="0.6" fill="none"/>
<path d="M165.5,367 h6 v3 q-3,2 -6,0 Z" fill="#fff" stroke="#4e4e4e" stroke-width="0.6"/><ellipse cx="168.5" cy="367" rx="3" ry="1.4" fill="#444"/>
<path d="M174,364 l2,-1 l1,2 l0,2 l-2,1" stroke="#4e4e4e" stroke-width="0.6" fill="none"/>
<path d="M158,375 l3,0 l0,3 l-3,0 Z" stroke="#4e4e4e" stroke-width="0.6" fill="none"/>
<rect x="164.8" y="383.5" width="7.4" height="14" rx="1.5" fill="#b8b8b8" stroke="#555" stroke-width="0.6"/>
<path d="M165.0,385 L172.0,386.5" stroke="#555" stroke-width="0.5" fill="none"/>
<path d="M165.0,388 L172.0,389.5" stroke="#555" stroke-width="0.5" fill="none"/>
<path d="M165.0,391 L172.0,392.5" stroke="#555" stroke-width="0.5" fill="none"/>
<path d="M165.0,394 L172.0,395.5" stroke="#555" stroke-width="0.5" fill="none"/>
<ellipse cx="168.5" cy="411.3" rx="5" ry="2.8" stroke="#4e4e4e" stroke-width="0.8" fill="#fff"/>
<ellipse cx="185.8" cy="411" rx="5.5" ry="2.6" stroke="#4e4e4e" stroke-width="0.8" fill="#fff"/>
<ellipse cx="185.8" cy="411" rx="3" ry="1.3" stroke="#4e4e4e" stroke-width="0.6" fill="none"/>
<path d="M173,409.5 L181,409.5" stroke="#4e4e4e" stroke-width="0.6" fill="none"/>
<path d="M173,413 L181,413" stroke="#4e4e4e" stroke-width="0.6" fill="none"/>
<ellipse cx="168.5" cy="411.3" rx="2.2" ry="1.2" stroke="#4e4e4e" stroke-width="0.5" fill="none"/>
<rect x="163.0" y="420" width="11" height="17" rx="3" fill="#fff" stroke="#4e4e4e" stroke-width="0.7"/>
<ellipse cx="168.5" cy="422.5" rx="5.3" ry="1.6" stroke="#4e4e4e" stroke-width="0.7" fill="none"/>
<ellipse cx="168.5" cy="425.5" rx="5.3" ry="1.6" stroke="#4e4e4e" stroke-width="0.7" fill="none"/>
<ellipse cx="168.5" cy="428.5" rx="5.3" ry="1.6" stroke="#4e4e4e" stroke-width="0.7" fill="none"/>
<ellipse cx="168.5" cy="431.5" rx="5.3" ry="1.6" stroke="#4e4e4e" stroke-width="0.7" fill="none"/>
<ellipse cx="168.5" cy="434.5" rx="5.3" ry="1.6" stroke="#4e4e4e" stroke-width="0.7" fill="none"/>
<rect x="165.9" y="447" width="5.2" height="25" fill="#fff" stroke="#4e4e4e" stroke-width="0.7"/><ellipse cx="168.5" cy="447.5" rx="2.6" ry="1.3" fill="#555"/>
<path d="M167.0,478 V524 Q166.5,528 161.5,530 M170.0,478 V524 Q170.5,528 175.5,530" stroke="#4e4e4e" stroke-width="0.7" fill="none"/>
<ellipse cx="168.5" cy="531" rx="7" ry="3.6" stroke="#4e4e4e" stroke-width="0.8" fill="#fff"/>
<ellipse cx="168.5" cy="530.5" rx="4" ry="1.8" stroke="#4e4e4e" stroke-width="0.6" fill="none"/>
<rect x="167.0" y="478" width="3" height="4" fill="#777"/>
<path d="M202.5,332 L202.5,340" stroke="#4e4e4e" stroke-width="0.6" fill="none"/>
<path d="M202.5,345 L202.5,361" stroke="#4e4e4e" stroke-width="0.6" fill="none"/>
<path d="M202.5,375 L202.5,386" stroke="#4e4e4e" stroke-width="0.6" fill="none"/>
<path d="M202.5,391 L202.5,397" stroke="#4e4e4e" stroke-width="0.6" fill="none"/>
<path d="M202.5,415 L202.5,423" stroke="#4e4e4e" stroke-width="0.6" fill="none"/>
<path d="M202.5,448 L202.5,455" stroke="#4e4e4e" stroke-width="0.6" fill="none"/>
<path d="M196.5,328 v2.5 q6,3.5 12,0 v-2.5" fill="#fff" stroke="#4e4e4e" stroke-width="0.7"/>
<ellipse cx="202.5" cy="328" rx="6" ry="3.5" stroke="#4e4e4e" stroke-width="0.8" fill="#fff"/>
<ellipse cx="202.5" cy="328" rx="2.8" ry="1.5" stroke="#4e4e4e" stroke-width="0.6" fill="none"/>
<path d="M199.5,340 h6 v3 q-3,2 -6,0 Z" fill="#fff" stroke="#4e4e4e" stroke-width="0.6"/><ellipse cx="202.5" cy="340.5" rx="3" ry="1.5" fill="#333"/>
<path d="M191,345 l3,0 l0,3 l-3,0 Z" stroke="#4e4e4e" stroke-width="0.6" fill="none"/>
<path d="M211,334 l2,0 l1,3 l-2,1" stroke="#555" stroke-width="0.7" fill="none"/>
<rect x="198.2" y="362" width="8.6" height="12.5" rx="2" fill="#b4b4b4" stroke="#555" stroke-width="0.6"/>
<path d="M199.0,364 Q202.5,362 206.0,364 M199.0,366.5 Q200.5,369 202.5,366.5 Q204.5,364 206.0,366.5 M199.0,370 Q202.5,368 206.0,370 M199.0,372.5 Q200.5,375 202.5,372.5 Q204.5,370 206.0,372.5" stroke="#444" stroke-width="0.6" fill="none"/>
<ellipse cx="202.5" cy="389" rx="5.5" ry="3" stroke="#4e4e4e" stroke-width="0.8" fill="#fff"/>
<ellipse cx="184.3" cy="388" rx="5" ry="3" stroke="#4e4e4e" stroke-width="0.8" fill="#fff"/>
<ellipse cx="184.3" cy="388" rx="2.8" ry="1.4" stroke="#4e4e4e" stroke-width="0.6" fill="none"/>
<path d="M189,386.5 L197,387.5" stroke="#4e4e4e" stroke-width="0.6" fill="none"/>
<path d="M189,390 L197,390.5" stroke="#4e4e4e" stroke-width="0.6" fill="none"/>
<ellipse cx="202.5" cy="389" rx="2.4" ry="1.3" stroke="#4e4e4e" stroke-width="0.5" fill="none"/>
<rect x="196.9" y="399.5" width="11.2" height="14.5" rx="3" fill="#fff" stroke="#4e4e4e" stroke-width="0.7"/>
<ellipse cx="202.5" cy="401.5" rx="5.4" ry="1.5" stroke="#4e4e4e" stroke-width="0.7" fill="none"/>
<ellipse cx="202.5" cy="404.3" rx="5.4" ry="1.5" stroke="#4e4e4e" stroke-width="0.7" fill="none"/>
<ellipse cx="202.5" cy="407.1" rx="5.4" ry="1.5" stroke="#4e4e4e" stroke-width="0.7" fill="none"/>
<ellipse cx="202.5" cy="409.9" rx="5.4" ry="1.5" stroke="#4e4e4e" stroke-width="0.7" fill="none"/>
<ellipse cx="202.5" cy="412.3" rx="5.4" ry="1.5" stroke="#4e4e4e" stroke-width="0.7" fill="none"/>
<rect x="199.1" y="423" width="6.8" height="25" rx="1" fill="#fff" stroke="#4e4e4e" stroke-width="0.7"/><ellipse cx="202.5" cy="423.5" rx="3" ry="1.4" fill="#666"/>
<path d="M200.9,456 V502 Q200.5,506 195.5,508 M204.1,456 V502 Q204.5,506 209.5,508" stroke="#4e4e4e" stroke-width="0.7" fill="none"/>
<ellipse cx="202.5" cy="509" rx="7" ry="3.6" stroke="#4e4e4e" stroke-width="0.8" fill="#fff"/>
<ellipse cx="202.5" cy="508.5" rx="4" ry="1.8" stroke="#4e4e4e" stroke-width="0.6" fill="none"/>
<rect x="200.9" y="456" width="3.2" height="6" fill="#777"/>
<rect x="125" y="207" width="6" height="7.2" fill="#ffff00"/>
<text x="128.0" y="213.4" font-size="7" text-anchor="middle" fill="#3a3a3a" font-family="Liberation Sans" letter-spacing="-0.3" >2</text>
<rect x="45" y="219" width="6" height="7.2" fill="#ffff00"/>
<text x="48.0" y="225.4" font-size="7" text-anchor="middle" fill="#3a3a3a" font-family="Liberation Sans" letter-spacing="-0.3" >3</text>
<rect x="43" y="241" width="6" height="7.2" fill="#ffff00"/>
<text x="46.0" y="247.4" font-size="7" text-anchor="middle" fill="#3a3a3a" font-family="Liberation Sans" letter-spacing="-0.3" >4</text>
<rect x="275" y="192" width="9" height="7.2" fill="#ffff00"/>
<text x="279.5" y="198.4" font-size="7" text-anchor="middle" fill="#3a3a3a" font-family="Liberation Sans" letter-spacing="-0.3" >10</text>
<rect x="260" y="199" width="9" height="7.2" fill="#ffff00"/>
<text x="264.5" y="205.4" font-size="7" text-anchor="middle" fill="#3a3a3a" font-family="Liberation Sans" letter-spacing="-0.3" >11</text>
<rect x="259" y="253" width="9" height="7.2" fill="#ffff00"/>
<text x="263.5" y="259.4" font-size="7" text-anchor="middle" fill="#3a3a3a" font-family="Liberation Sans" letter-spacing="-0.3" >13</text>
<rect x="272" y="261" width="9" height="7.2" fill="#ffff00"/>
<text x="276.5" y="267.4" font-size="7" text-anchor="middle" fill="#3a3a3a" font-family="Liberation Sans" letter-spacing="-0.3" >12</text>
<rect x="226" y="289" width="6" height="7.2" fill="#ffff00"/>
<text x="229.0" y="295.4" font-size="7" text-anchor="middle" fill="#3a3a3a" font-family="Liberation Sans" letter-spacing="-0.3" >9</text>
<rect x="40" y="298" width="6" height="7.2" fill="#ffff00"/>
<text x="43.0" y="304.4" font-size="7" text-anchor="middle" fill="#3a3a3a" font-family="Liberation Sans" letter-spacing="-0.3" >6</text>
<rect x="25" y="308" width="6" height="7.2" fill="#ffff00"/>
<text x="28.0" y="314.4" font-size="7" text-anchor="middle" fill="#3a3a3a" font-family="Liberation Sans" letter-spacing="-0.3" >5</text>
<rect x="95" y="358" width="6" height="7.2" fill="#ffff00"/>
<text x="98.0" y="364.4" font-size="7" text-anchor="middle" fill="#3a3a3a" font-family="Liberation Sans" letter-spacing="-0.3" >8</text>
<rect x="74" y="370" width="6" height="7.2" fill="#ffff00"/>
<text x="77.0" y="376.4" font-size="7" text-anchor="middle" fill="#3a3a3a" font-family="Liberation Sans" letter-spacing="-0.3" >7</text>
<rect x="143" y="341" width="9" height="7.2" fill="#ffff00"/>
<text x="147.5" y="347.4" font-size="7" text-anchor="middle" fill="#3a3a3a" font-family="Liberation Sans" letter-spacing="-0.3" >14</text>
<rect x="143" y="355" width="9" height="7.2" fill="#ffff00"/>
<text x="147.5" y="361.4" font-size="7" text-anchor="middle" fill="#3a3a3a" font-family="Liberation Sans" letter-spacing="-0.3" >16</text>
<rect x="137" y="367" width="9" height="7.2" fill="#ffff00"/>
<text x="141.5" y="373.4" font-size="7" text-anchor="middle" fill="#3a3a3a" font-family="Liberation Sans" letter-spacing="-0.3" >15</text>
<rect x="172" y="329" width="9" height="7.2" fill="#ffff00"/>
<text x="176.5" y="335.4" font-size="7" text-anchor="middle" fill="#3a3a3a" font-family="Liberation Sans" letter-spacing="-0.3" >24</text>
<rect x="223" y="311" width="9" height="7.2" fill="#ffff00"/>
<text x="227.5" y="317.4" font-size="7" text-anchor="middle" fill="#3a3a3a" font-family="Liberation Sans" letter-spacing="-0.3" >23</text>
<rect x="226" y="322" width="9" height="7.2" fill="#ffff00"/>
<text x="230.5" y="328.4" font-size="7" text-anchor="middle" fill="#3a3a3a" font-family="Liberation Sans" letter-spacing="-0.3" >26</text>
<rect x="180" y="323" width="9" height="7.2" fill="#ffff00"/>
<text x="184.5" y="329.4" font-size="7" text-anchor="middle" fill="#3a3a3a" font-family="Liberation Sans" letter-spacing="-0.3" >25</text>
<rect x="186" y="352" width="9" height="7.2" fill="#ffff00"/>
<text x="190.5" y="358.4" font-size="7" text-anchor="middle" fill="#3a3a3a" font-family="Liberation Sans" letter-spacing="-0.3" >17</text>
<rect x="225" y="352" width="9" height="7.2" fill="#ffff00"/>
<text x="229.5" y="358.4" font-size="7" text-anchor="middle" fill="#3a3a3a" font-family="Liberation Sans" letter-spacing="-0.3" >27</text>
<rect x="224" y="371" width="9" height="7.2" fill="#ffff00"/>
<text x="228.5" y="377.4" font-size="7" text-anchor="middle" fill="#3a3a3a" font-family="Liberation Sans" letter-spacing="-0.3" >28</text>
<rect x="224" y="393" width="9" height="7.2" fill="#ffff00"/>
<text x="228.5" y="399.4" font-size="7" text-anchor="middle" fill="#3a3a3a" font-family="Liberation Sans" letter-spacing="-0.3" >29</text>
<rect x="140" y="383" width="9" height="7.2" fill="#ffff00"/>
<text x="144.5" y="389.4" font-size="7" text-anchor="middle" fill="#3a3a3a" font-family="Liberation Sans" letter-spacing="-0.3" >18</text>
<rect x="136" y="399" width="9" height="7.2" fill="#ffff00"/>
<text x="140.5" y="405.4" font-size="7" text-anchor="middle" fill="#3a3a3a" font-family="Liberation Sans" letter-spacing="-0.3" >19</text>
<rect x="134" y="418" width="9" height="7.2" fill="#ffff00"/>
<text x="138.5" y="424.4" font-size="7" text-anchor="middle" fill="#3a3a3a" font-family="Liberation Sans" letter-spacing="-0.3" >20</text>
<rect x="137" y="448" width="9" height="7.2" fill="#ffff00"/>
<text x="141.5" y="454.4" font-size="7" text-anchor="middle" fill="#3a3a3a" font-family="Liberation Sans" letter-spacing="-0.3" >21</text>
<rect x="138" y="494" width="9" height="7.2" fill="#ffff00"/>
<text x="142.5" y="500.4" font-size="7" text-anchor="middle" fill="#3a3a3a" font-family="Liberation Sans" letter-spacing="-0.3" >22</text>
<rect x="222" y="423" width="9" height="7.2" fill="#ffff00"/>
<text x="226.5" y="429.4" font-size="7" text-anchor="middle" fill="#3a3a3a" font-family="Liberation Sans" letter-spacing="-0.3" >30</text>
<rect x="223" y="467" width="9" height="7.2" fill="#ff8282"/>
<text x="227.5" y="473.4" font-size="7" text-anchor="middle" fill="#3a3a3a" font-family="Liberation Sans" letter-spacing="-0.3" >31</text></svg><div class="a" style="left:5px;top:21px;width:44px;height:170px;border:1px solid #a4a4a4;background:#fff"></div>
<div class="a" style="left:9px;top:25px;width:36px;height:162px;background:#aaaaaa"></div>
<svg class="a" style="left:16px;top:30px" width="24" height="150" viewBox="16 30 24 150">
<defs><linearGradient id="bg" x1="0" y1="0" x2="0" y2="1"><stop offset="0" stop-color="#f6f6f6"/><stop offset="1" stop-color="#cdcdcd"/></linearGradient></defs>
<g stroke="#858585" stroke-width="0.9" fill="url(#bg)">
<path d="M20,34 H34 V39.3 L36.3,41 L34,42.7 V48 H20 Z"/>
<path d="M20,57 H34 V71 H20 V65.7 L17.7,64 L20,62.3 Z"/>
<rect x="20" y="86" width="14" height="14"/>
<rect x="20" y="109" width="14" height="14"/>
</g>
<g fill="#585858"><rect x="22" y="40" width="10" height="2"/><rect x="26" y="36" width="2" height="10"/>
<rect x="22" y="63" width="10" height="2"/>
<rect x="21.6" y="87.6" width="3.6" height="3.6" fill="#6e6e6e"/><rect x="28.8" y="87.6" width="3.6" height="3.6" fill="#6e6e6e"/><rect x="21.6" y="94.8" width="3.6" height="3.6" fill="#6e6e6e"/><rect x="28.8" y="94.8" width="3.6" height="3.6" fill="#6e6e6e"/>
</g>
<rect x="23.5" y="112.5" width="7" height="7" fill="#e0e0e0" stroke="#555" stroke-width="1.2"/>
<defs><linearGradient id="eg" x1="0" y1="0" x2="1" y2="0"><stop offset="0" stop-color="#f0f0f0"/><stop offset="0.5" stop-color="#c8c8c8"/><stop offset="1" stop-color="#aaaaaa"/></linearGradient></defs>
<rect x="18.6" y="161" width="5.2" height="15.4" fill="#5e5e5e" opacity="0.55"/>
<g fill="#ececec"><rect x="19.4" y="161.8" width="3.6" height="3.8"/><rect x="19.4" y="166.8" width="3.6" height="3.8"/><rect x="19.4" y="171.8" width="3.6" height="3.8"/></g>
<rect x="24.2" y="161" width="11" height="15.4" fill="url(#eg)"/>
<path d="M25,161.6 H33 M25,161.6 V175.8 H33" fill="none" stroke="#fafafa" stroke-width="1.1"/>
<path d="M26.2,169 H31.2" stroke="#4a4a4a" stroke-width="2.2"/><path d="M30.4,165.8 L35.2,169 L30.4,172.2 Z" fill="#4a4a4a"/>
</svg>

<div class="a hd" style="left:338px;width:79px;font-size:11px;padding-left:5px"></div>
<div class="a hd" style="left:418px;width:64px;font-size:10.8px;padding-left:5px">Symbol(s)</div>
<div class="a hd" style="left:483px;width:34px;font-size:11.5px;padding-left:4px">Item</div>
<div class="a hd" style="left:518px;width:72px;font-size:11px;padding-left:5px">Parts No.</div>
<div class="a hd" style="left:591px;width:34px;font-size:11.8px;padding-left:5px">Qty.</div>
<div class="a hd" style="left:626px;width:83px;font-size:11px;padding-left:5px">Latest Part No.</div>
<div class="a hd" style="left:710px;width:122px;font-size:11.7px;padding-left:5px">Description</div>
<div class="a hd" style="left:833px;width:51px;font-size:11.8px;padding-left:5px">Cut Out</div>
<div class="a hd" style="left:885px;width:41px;font-size:11.5px;padding-left:5px">Cut In</div>
<div class="a hd" style="left:927px;width:143px;font-size:11.4px;padding-left:5px">Comment</div>
<svg class="a" style="left:364px;top:22px" width="18" height="18" viewBox="364 22 18 18">
<rect x="365" y="23" width="13.4" height="13.7" fill="#2170c4"/>
<rect x="366" y="24.2" width="12" height="1.1" fill="#f4f8fc"/>
<rect x="366" y="26.4" width="3.2" height="9.6" fill="#f6f8fb"/>
<rect x="369.2" y="26.4" width="8.4" height="9.6" fill="#3d86d2"/>
<g fill="#2170c4"><rect x="367.6" y="27.4" width="1.2" height="1"/><rect x="367.6" y="29.6" width="1.2" height="1"/><rect x="367.6" y="31.8" width="1.2" height="1"/><rect x="367.6" y="34" width="1.2" height="1"/></g>
<circle cx="373.4" cy="31.3" r="4.4" fill="#d6d8dc" stroke="#2a6fb8" stroke-width="0.9"/>
<ellipse cx="372.6" cy="29.6" rx="2.4" ry="1.3" fill="#f4f4f4"/>
<path d="M376.4,34.2 L380.6,38.6" stroke="#4a86c4" stroke-width="2.2"/>
</svg>

<div class="a sel" style="top:621px"></div>
<div class="a vl" style="left:417px"></div>
<div class="a vl" style="left:482px"></div>
<div class="a vl" style="left:517px"></div>
<div class="a vl" style="left:590px"></div>
<div class="a vl" style="left:625px"></div>
<div class="a vl" style="left:709px"></div>
<div class="a vl" style="left:832px"></div>
<div class="a vl" style="left:884px"></div>
<div class="a vl" style="left:926px"></div>
<div class="a hl" style="top:60px"></div>
<div class="a hl" style="top:80px"></div>
<div class="a hl" style="top:100px"></div>
<div class="a hl" style="top:120px"></div>
<div class="a hl" style="top:140px"></div>
<div class="a hl" style="top:160px"></div>
<div class="a hl" style="top:180px"></div>
<div class="a hl" style="top:200px"></div>
<div class="a hl" style="top:220px"></div>
<div class="a hl" style="top:240px"></div>
<div class="a hl" style="top:260px"></div>
<div class="a hl" style="top:280px"></div>
<div class="a hl" style="top:300px"></div>
<div class="a hl" style="top:320px"></div>
<div class="a hl" style="top:340px"></div>
<div class="a hl" style="top:360px"></div>
<div class="a hl" style="top:380px"></div>
<div class="a hl" style="top:400px"></div>
<div class="a hl" style="top:420px"></div>
<div class="a hl" style="top:440px"></div>
<div class="a hl" style="top:460px"></div>
<div class="a hl" style="top:480px"></div>
<div class="a hl" style="top:500px"></div>
<div class="a hl" style="top:520px"></div>
<div class="a hl" style="top:540px"></div>
<div class="a hl" style="top:560px"></div>
<div class="a hl" style="top:580px"></div>
<div class="a hl" style="top:600px"></div>
<div class="a hl" style="top:620px"></div>
<div class="a hl" style="top:640px"></div>
<div class="a hl" style="top:660px"></div>
<div class="a" style="left:417px;top:621px;width:1px;height:19px;background:#fff"></div>
<div class="a" style="left:482px;top:621px;width:1px;height:19px;background:#fff"></div>
<div class="a" style="left:517px;top:621px;width:1px;height:19px;background:#fff"></div>
<div class="a" style="left:590px;top:621px;width:1px;height:19px;background:#fff"></div>
<div class="a" style="left:625px;top:621px;width:1px;height:19px;background:#fff"></div>
<div class="a" style="left:709px;top:621px;width:1px;height:19px;background:#fff"></div>
<div class="a" style="left:832px;top:621px;width:1px;height:19px;background:#fff"></div>
<div class="a" style="left:884px;top:621px;width:1px;height:19px;background:#fff"></div>
<div class="a" style="left:926px;top:621px;width:1px;height:19px;background:#fff"></div>
<div class="a tx" style="left:486px;top:41px;color:#000">3</div>
<div class="a tx" style="left:521px;top:41px;color:#000">T400428</div>
<div class="a tx" style="left:594px;top:41px;color:#000">2</div>
<div class="a tx" style="left:629px;top:41px;color:#000">T400428</div>
<div class="a tx" style="left:713px;top:41px;color:#000">PLUG</div>
<div class="a tx" style="left:486px;top:61px;color:#000">4</div>
<div class="a tx" style="left:521px;top:61px;color:#000">CH10146</div>
<div class="a tx" style="left:594px;top:61px;color:#000">2</div>
<div class="a tx" style="left:629px;top:61px;color:#000">CH10146</div>
<div class="a tx" style="left:713px;top:61px;color:#000">SEAL - O RING</div>
<div class="a tx" style="left:486px;top:81px;color:#000">5</div>
<div class="a tx" style="left:521px;top:81px;color:#000">T400427</div>
<div class="a tx" style="left:594px;top:81px;color:#000">1</div>
<div class="a tx" style="left:629px;top:81px;color:#000">T400427</div>
<div class="a tx" style="left:713px;top:81px;color:#000">PLUG</div>
<div class="a tx" style="left:486px;top:101px;color:#000">6</div>
<div class="a tx" style="left:521px;top:101px;color:#000">CH11880</div>
<div class="a tx" style="left:594px;top:101px;color:#000">1</div>
<div class="a tx" style="left:629px;top:101px;color:#000">CH11880</div>
<div class="a tx" style="left:713px;top:101px;color:#000">SEAL - O RING</div>
<div class="a tx" style="left:486px;top:121px;color:#000">7</div>
<div class="a tx" style="left:521px;top:121px;color:#000">T400763</div>
<div class="a tx" style="left:594px;top:121px;color:#000">1</div>
<div class="a tx" style="left:629px;top:121px;color:#000">T400763</div>
<div class="a tx" style="left:713px;top:121px;color:#000">PLUG</div>
<div class="a tx" style="left:486px;top:141px;color:#000">8</div>
<div class="a tx" style="left:521px;top:141px;color:#000">T400762</div>
<div class="a tx" style="left:594px;top:141px;color:#000">1</div>
<div class="a tx" style="left:629px;top:141px;color:#000">T400762</div>
<div class="a tx" style="left:713px;top:141px;color:#000">SEAL - O RING</div>
<div class="a tx" style="left:486px;top:161px;color:#000">9</div>
<div class="a tx" style="left:521px;top:161px;color:#000">CH10258</div>
<div class="a tx" style="left:594px;top:161px;color:#000">2</div>
<div class="a tx" style="left:629px;top:161px;color:#000">CH10258</div>
<div class="a tx" style="left:713px;top:161px;color:#000">PLUG</div>
<div class="a tx" style="left:486px;top:181px;color:#000">10</div>
<div class="a tx" style="left:521px;top:181px;color:#000">T400763</div>
<div class="a tx" style="left:594px;top:181px;color:#000">1</div>
<div class="a tx" style="left:629px;top:181px;color:#000">T400763</div>
<div class="a tx" style="left:713px;top:181px;color:#000">PLUG</div>
<div class="a tx" style="left:486px;top:201px;color:#000">11</div>
<div class="a tx" style="left:521px;top:201px;color:#000">T400762</div>
<div class="a tx" style="left:594px;top:201px;color:#000">1</div>
<div class="a tx" style="left:629px;top:201px;color:#000">T400762</div>
<div class="a tx" style="left:713px;top:201px;color:#000">SEAL - O RING</div>
<div class="a tx" style="left:486px;top:221px;color:#000">12</div>
<div class="a tx" style="left:521px;top:221px;color:#000">T400427</div>
<div class="a tx" style="left:594px;top:221px;color:#000">5</div>
<div class="a tx" style="left:629px;top:221px;color:#000">T400427</div>
<div class="a tx" style="left:713px;top:221px;color:#000">PLUG</div>
<div class="a tx" style="left:486px;top:241px;color:#000">13</div>
<div class="a tx" style="left:521px;top:241px;color:#000">CH11880</div>
<div class="a tx" style="left:594px;top:241px;color:#000">5</div>
<div class="a tx" style="left:629px;top:241px;color:#000">CH11880</div>
<div class="a tx" style="left:713px;top:241px;color:#000">SEAL - O RING</div>
<div class="a tx" style="left:486px;top:261px;color:#000">14</div>
<div class="a tx" style="left:521px;top:261px;color:#000">T400746</div>
<div class="a tx" style="left:594px;top:261px;color:#000">12</div>
<div class="a tx" style="left:629px;top:261px;color:#000">T400746</div>
<div class="a tx" style="left:713px;top:261px;color:#000">RETAINER</div>
<div class="a tx" style="left:486px;top:281px;color:#000">15</div>
<div class="a tx" style="left:521px;top:281px;color:#000">CH11789</div>
<div class="a tx" style="left:594px;top:281px;color:#000">12</div>
<div class="a tx" style="left:629px;top:281px;color:#000">CH11789</div>
<div class="a tx" style="left:713px;top:281px;color:#000">LOCKNUT</div>
<div class="a tx" style="left:486px;top:301px;color:#000">16</div>
<div class="a tx" style="left:521px;top:301px;color:#000">T400753</div>
<div class="a tx" style="left:594px;top:301px;color:#000">12</div>
<div class="a tx" style="left:629px;top:301px;color:#000">T400753</div>
<div class="a tx" style="left:713px;top:301px;color:#000">SEAL - VALVE STEM</div>
<div class="a tx" style="left:486px;top:321px;color:#000">17</div>
<div class="a tx" style="left:521px;top:321px;color:#000">CH11789</div>
<div class="a tx" style="left:594px;top:321px;color:#000">12</div>
<div class="a tx" style="left:629px;top:321px;color:#000">CH11789</div>
<div class="a tx" style="left:713px;top:321px;color:#000">LOCKNUT</div>
<div class="a tx" style="left:486px;top:341px;color:#000">18</div>
<div class="a tx" style="left:521px;top:341px;color:#000">T400761</div>
<div class="a tx" style="left:594px;top:341px;color:#000">12</div>
<div class="a tx" style="left:629px;top:341px;color:#000">T400761</div>
<div class="a tx" style="left:713px;top:341px;color:#000">VALVE SPRING</div>
<div class="a tx" style="left:486px;top:361px;color:#000">19</div>
<div class="a tx" style="left:521px;top:361px;color:#000">T400748</div>
<div class="a tx" style="left:594px;top:361px;color:#000">6</div>
<div class="a tx" style="left:629px;top:361px;color:#000">T400748</div>
<div class="a tx" style="left:713px;top:361px;color:#000">VALVE SPRING SEAT</div>
<div class="a tx" style="left:486px;top:381px;color:#000">20</div>
<div class="a tx" style="left:521px;top:381px;color:#000">T400751</div>
<div class="a tx" style="left:594px;top:381px;color:#000">12</div>
<div class="a tx" style="left:629px;top:381px;color:#000">T400751</div>
<div class="a tx" style="left:713px;top:381px;color:#000">VALVE SPRING</div>
<div class="a tx" style="left:486px;top:401px;color:#000">21</div>
<div class="a tx" style="left:521px;top:401px;color:#000">T400742</div>
<div class="a tx" style="left:594px;top:401px;color:#000">12</div>
<div class="a tx" style="left:629px;top:401px;color:#000">T400742</div>
<div class="a tx" style="left:713px;top:401px;color:#000">VALVE GUIDE</div>
<div class="a tx" style="left:486px;top:421px;color:#000">22</div>
<div class="a tx" style="left:521px;top:421px;color:#000">T403170</div>
<div class="a tx" style="left:594px;top:421px;color:#000">12</div>
<div class="a tx" style="left:629px;top:421px;color:#000">T403170</div>
<div class="a tx" style="left:713px;top:421px;color:#000">INTAKE VALVE</div>
<div class="a tx" style="left:486px;top:441px;color:#000">22</div>
<div class="a tx" style="left:521px;top:441px;color:#000">T400744</div>
<div class="a tx" style="left:594px;top:441px;color:#000">12</div>
<div class="a tx" style="left:629px;top:441px;color:#000">T400744</div>
<div class="a tx" style="left:713px;top:441px;color:#000">INTAKE VALVE</div>
<div class="a tx" style="left:486px;top:461px;color:#000">23</div>
<div class="a tx" style="left:521px;top:461px;color:#000">T400747</div>
<div class="a tx" style="left:594px;top:461px;color:#000">12</div>
<div class="a tx" style="left:629px;top:461px;color:#000">T400747</div>
<div class="a tx" style="left:713px;top:461px;color:#000">RETAINER</div>
<div class="a tx" style="left:486px;top:481px;color:#000">24</div>
<div class="a tx" style="left:521px;top:481px;color:#000">CH10019</div>
<div class="a tx" style="left:594px;top:481px;color:#000">12</div>
<div class="a tx" style="left:629px;top:481px;color:#000">CH10019</div>
<div class="a tx" style="left:713px;top:481px;color:#000">VALVE COLLET</div>
<div class="a tx" style="left:486px;top:501px;color:#000">25</div>
<div class="a tx" style="left:521px;top:501px;color:#000">CH11486</div>
<div class="a tx" style="left:594px;top:501px;color:#000">12</div>
<div class="a tx" style="left:629px;top:501px;color:#000">CH11486</div>
<div class="a tx" style="left:713px;top:501px;color:#000">SEAL - VALVE STEM</div>
<div class="a tx" style="left:486px;top:521px;color:#000">26</div>
<div class="a tx" style="left:521px;top:521px;color:#000">CH10019</div>
<div class="a tx" style="left:594px;top:521px;color:#000">12</div>
<div class="a tx" style="left:629px;top:521px;color:#000">CH10019</div>
<div class="a tx" style="left:713px;top:521px;color:#000">VALVE COLLET</div>
<div class="a tx" style="left:486px;top:541px;color:#000">27</div>
<div class="a tx" style="left:521px;top:541px;color:#000">T400750</div>
<div class="a tx" style="left:594px;top:541px;color:#000">12</div>
<div class="a tx" style="left:629px;top:541px;color:#000">T400750</div>
<div class="a tx" style="left:713px;top:541px;color:#000">VALVE SPRING</div>
<div class="a tx" style="left:486px;top:561px;color:#000">28</div>
<div class="a tx" style="left:521px;top:561px;color:#000">T400749</div>
<div class="a tx" style="left:594px;top:561px;color:#000">6</div>
<div class="a tx" style="left:629px;top:561px;color:#000">T400749</div>
<div class="a tx" style="left:713px;top:561px;color:#000">VALVE SPRING SEAT</div>
<div class="a tx" style="left:486px;top:581px;color:#000">29</div>
<div class="a tx" style="left:521px;top:581px;color:#000">T400752</div>
<div class="a tx" style="left:594px;top:581px;color:#000">12</div>
<div class="a tx" style="left:629px;top:581px;color:#000">T400752</div>
<div class="a tx" style="left:713px;top:581px;color:#000">VALVE SPRING</div>
<div class="a tx" style="left:486px;top:601px;color:#000">30</div>
<div class="a tx" style="left:521px;top:601px;color:#000">T400743</div>
<div class="a tx" style="left:594px;top:601px;color:#000">12</div>
<div class="a tx" style="left:629px;top:601px;color:#000">T400743</div>
<div class="a tx" style="left:713px;top:601px;color:#000">VALVE GUIDE</div>
<div class="a tx" style="left:486px;top:621px;color:#fff">31</div>
<div class="a tx" style="left:521px;top:621px;color:#fff">T403169</div>
<div class="a tx" style="left:594px;top:621px;color:#fff">12</div>
<div class="a tx" style="left:629px;top:621px;color:#fff">T403169</div>
<div class="a tx" style="left:713px;top:621px;color:#fff">EXHAUST VALVE</div>
<div class="a tx" style="left:486px;top:641px;color:#000">31</div>
<div class="a tx" style="left:521px;top:641px;color:#000">T400745</div>
<div class="a tx" style="left:594px;top:641px;color:#000">12</div>
<div class="a tx" style="left:629px;top:641px;color:#000">T400745</div>
<div class="a tx" style="left:713px;top:641px;color:#000">EXHAUST VALVE</div>
<svg class="a" style="left:343px;top:44px" width="12" height="12" viewBox="0 0 12 12"><path d="M6.66,2.05 L7.19,1.04 L8.66,1.65 L8.32,2.74 L9.26,3.68 L10.35,3.34 L10.96,4.81 L9.95,5.34 L9.95,6.66 L10.96,7.19 L10.35,8.66 L9.26,8.32 L8.32,9.26 L8.66,10.35 L7.19,10.96 L6.66,9.95 L5.34,9.95 L4.81,10.96 L3.34,10.35 L3.68,9.26 L2.74,8.32 L1.65,8.66 L1.04,7.19 L2.05,6.66 L2.05,5.34 L1.04,4.81 L1.65,3.34 L2.74,3.68 L3.68,2.74 L3.34,1.65 L4.81,1.04 L5.34,2.05Z" fill="#86b835" stroke="#78a82a" stroke-width="0.3"/><circle cx="6" cy="6" r="2.1" fill="#c8e49a"/><circle cx="6" cy="6" r="1.5" fill="#fff"/></svg>
<svg class="a" style="left:358px;top:43px" width="18" height="14" viewBox="0 0 18 14"><g fill="none" stroke="#44699d" stroke-linejoin="round" stroke-linecap="round">
<path d="M1.2,0.6 L2.6,0.8 L4,2.2" stroke-width="1.4"/>
<path d="M4,2.4 L16.8,2.4 L13.8,7.4 L4.5,7.4 Z M4.2,4.7 L15.6,4.7 M6.4,2.6 L6.6,7.2 M8.6,2.6 L8.7,7.2 M10.8,2.6 L10.8,7.2 M13,2.6 L12.6,7.2" stroke-width="1"/>
<path d="M4.1,2.4 L4.3,10.4 L15.6,10.4" stroke-width="1.3"/></g>
<rect x="4.4" y="11.2" width="2.2" height="2" fill="#3b86d6"/><rect x="12.6" y="11.2" width="2.2" height="2" fill="#3b86d6"/><rect x="4.6" y="9.8" width="6" height="1.2" fill="#5a9ad8" opacity="0.6"/></svg>
<svg class="a" style="left:377px;top:42px" width="16" height="16" viewBox="0 0 16 16"><circle cx="8" cy="8" r="7" fill="url(#cg)"/><circle cx="8" cy="8" r="6.6" fill="none" stroke="#b5d0e6" stroke-width="0.8"/><rect x="7.1" y="4" width="1.8" height="1.8" fill="#2f63a6"/><rect x="7.1" y="6.8" width="1.8" height="5.4" fill="#2f63a6"/></svg>
<svg class="a" style="left:343px;top:64px" width="12" height="12" viewBox="0 0 12 12"><path d="M6.66,2.05 L7.19,1.04 L8.66,1.65 L8.32,2.74 L9.26,3.68 L10.35,3.34 L10.96,4.81 L9.95,5.34 L9.95,6.66 L10.96,7.19 L10.35,8.66 L9.26,8.32 L8.32,9.26 L8.66,10.35 L7.19,10.96 L6.66,9.95 L5.34,9.95 L4.81,10.96 L3.34,10.35 L3.68,9.26 L2.74,8.32 L1.65,8.66 L1.04,7.19 L2.05,6.66 L2.05,5.34 L1.04,4.81 L1.65,3.34 L2.74,3.68 L3.68,2.74 L3.34,1.65 L4.81,1.04 L5.34,2.05Z" fill="#86b835" stroke="#78a82a" stroke-width="0.3"/><circle cx="6" cy="6" r="2.1" fill="#c8e49a"/><circle cx="6" cy="6" r="1.5" fill="#fff"/></svg>
<svg class="a" style="left:358px;top:63px" width="18" height="14" viewBox="0 0 18 14"><g fill="none" stroke="#44699d" stroke-linejoin="round" stroke-linecap="round">
<path d="M1.2,0.6 L2.6,0.8 L4,2.2" stroke-width="1.4"/>
<path d="M4,2.4 L16.8,2.4 L13.8,7.4 L4.5,7.4 Z M4.2,4.7 L15.6,4.7 M6.4,2.6 L6.6,7.2 M8.6,2.6 L8.7,7.2 M10.8,2.6 L10.8,7.2 M13,2.6 L12.6,7.2" stroke-width="1"/>
<path d="M4.1,2.4 L4.3,10.4 L15.6,10.4" stroke-width="1.3"/></g>
<rect x="4.4" y="11.2" width="2.2" height="2" fill="#3b86d6"/><rect x="12.6" y="11.2" width="2.2" height="2" fill="#3b86d6"/><rect x="4.6" y="9.8" width="6" height="1.2" fill="#5a9ad8" opacity="0.6"/></svg>
<svg class="a" style="left:377px;top:62px" width="16" height="16" viewBox="0 0 16 16"><circle cx="8" cy="8" r="7" fill="url(#cg)"/><circle cx="8" cy="8" r="6.6" fill="none" stroke="#b5d0e6" stroke-width="0.8"/><rect x="7.1" y="4" width="1.8" height="1.8" fill="#2f63a6"/><rect x="7.1" y="6.8" width="1.8" height="5.4" fill="#2f63a6"/></svg>
<svg class="a" style="left:343px;top:84px" width="12" height="12" viewBox="0 0 12 12"><path d="M6.66,2.05 L7.19,1.04 L8.66,1.65 L8.32,2.74 L9.26,3.68 L10.35,3.34 L10.96,4.81 L9.95,5.34 L9.95,6.66 L10.96,7.19 L10.35,8.66 L9.26,8.32 L8.32,9.26 L8.66,10.35 L7.19,10.96 L6.66,9.95 L5.34,9.95 L4.81,10.96 L3.34,10.35 L3.68,9.26 L2.74,8.32 L1.65,8.66 L1.04,7.19 L2.05,6.66 L2.05,5.34 L1.04,4.81 L1.65,3.34 L2.74,3.68 L3.68,2.74 L3.34,1.65 L4.81,1.04 L5.34,2.05Z" fill="#86b835" stroke="#78a82a" stroke-width="0.3"/><circle cx="6" cy="6" r="2.1" fill="#c8e49a"/><circle cx="6" cy="6" r="1.5" fill="#fff"/></svg>
<svg class="a" style="left:358px;top:83px" width="18" height="14" viewBox="0 0 18 14"><g fill="none" stroke="#44699d" stroke-linejoin="round" stroke-linecap="round">
<path d="M1.2,0.6 L2.6,0.8 L4,2.2" stroke-width="1.4"/>
<path d="M4,2.4 L16.8,2.4 L13.8,7.4 L4.5,7.4 Z M4.2,4.7 L15.6,4.7 M6.4,2.6 L6.6,7.2 M8.6,2.6 L8.7,7.2 M10.8,2.6 L10.8,7.2 M13,2.6 L12.6,7.2" stroke-width="1"/>
<path d="M4.1,2.4 L4.3,10.4 L15.6,10.4" stroke-width="1.3"/></g>
<rect x="4.4" y="11.2" width="2.2" height="2" fill="#3b86d6"/><rect x="12.6" y="11.2" width="2.2" height="2" fill="#3b86d6"/><rect x="4.6" y="9.8" width="6" height="1.2" fill="#5a9ad8" opacity="0.6"/></svg>
<svg class="a" style="left:377px;top:82px" width="16" height="16" viewBox="0 0 16 16"><circle cx="8" cy="8" r="7" fill="url(#cg)"/><circle cx="8" cy="8" r="6.6" fill="none" stroke="#b5d0e6" stroke-width="0.8"/><rect x="7.1" y="4" width="1.8" height="1.8" fill="#2f63a6"/><rect x="7.1" y="6.8" width="1.8" height="5.4" fill="#2f63a6"/></svg>
<svg class="a" style="left:343px;top:104px" width="12" height="12" viewBox="0 0 12 12"><path d="M6.66,2.05 L7.19,1.04 L8.66,1.65 L8.32,2.74 L9.26,3.68 L10.35,3.34 L10.96,4.81 L9.95,5.34 L9.95,6.66 L10.96,7.19 L10.35,8.66 L9.26,8.32 L8.32,9.26 L8.66,10.35 L7.19,10.96 L6.66,9.95 L5.34,9.95 L4.81,10.96 L3.34,10.35 L3.68,9.26 L2.74,8.32 L1.65,8.66 L1.04,7.19 L2.05,6.66 L2.05,5.34 L1.04,4.81 L1.65,3.34 L2.74,3.68 L3.68,2.74 L3.34,1.65 L4.81,1.04 L5.34,2.05Z" fill="#86b835" stroke="#78a82a" stroke-width="0.3"/><circle cx="6" cy="6" r="2.1" fill="#c8e49a"/><circle cx="6" cy="6" r="1.5" fill="#fff"/></svg>
<svg class="a" style="left:358px;top:103px" width="18" height="14" viewBox="0 0 18 14"><g fill="none" stroke="#44699d" stroke-linejoin="round" stroke-linecap="round">
<path d="M1.2,0.6 L2.6,0.8 L4,2.2" stroke-width="1.4"/>
<path d="M4,2.4 L16.8,2.4 L13.8,7.4 L4.5,7.4 Z M4.2,4.7 L15.6,4.7 M6.4,2.6 L6.6,7.2 M8.6,2.6 L8.7,7.2 M10.8,2.6 L10.8,7.2 M13,2.6 L12.6,7.2" stroke-width="1"/>
<path d="M4.1,2.4 L4.3,10.4 L15.6,10.4" stroke-width="1.3"/></g>
<rect x="4.4" y="11.2" width="2.2" height="2" fill="#3b86d6"/><rect x="12.6" y="11.2" width="2.2" height="2" fill="#3b86d6"/><rect x="4.6" y="9.8" width="6" height="1.2" fill="#5a9ad8" opacity="0.6"/></svg>
<svg class="a" style="left:377px;top:102px" width="16" height="16" viewBox="0 0 16 16"><circle cx="8" cy="8" r="7" fill="url(#cg)"/><circle cx="8" cy="8" r="6.6" fill="none" stroke="#b5d0e6" stroke-width="0.8"/><rect x="7.1" y="4" width="1.8" height="1.8" fill="#2f63a6"/><rect x="7.1" y="6.8" width="1.8" height="5.4" fill="#2f63a6"/></svg>
<svg class="a" style="left:343px;top:124px" width="12" height="12" viewBox="0 0 12 12"><path d="M6.66,2.05 L7.19,1.04 L8.66,1.65 L8.32,2.74 L9.26,3.68 L10.35,3.34 L10.96,4.81 L9.95,5.34 L9.95,6.66 L10.96,7.19 L10.35,8.66 L9.26,8.32 L8.32,9.26 L8.66,10.35 L7.19,10.96 L6.66,9.95 L5.34,9.95 L4.81,10.96 L3.34,10.35 L3.68,9.26 L2.74,8.32 L1.65,8.66 L1.04,7.19 L2.05,6.66 L2.05,5.34 L1.04,4.81 L1.65,3.34 L2.74,3.68 L3.68,2.74 L3.34,1.65 L4.81,1.04 L5.34,2.05Z" fill="#86b835" stroke="#78a82a" stroke-width="0.3"/><circle cx="6" cy="6" r="2.1" fill="#c8e49a"/><circle cx="6" cy="6" r="1.5" fill="#fff"/></svg>
<svg class="a" style="left:358px;top:123px" width="18" height="14" viewBox="0 0 18 14"><g fill="none" stroke="#44699d" stroke-linejoin="round" stroke-linecap="round">
<path d="M1.2,0.6 L2.6,0.8 L4,2.2" stroke-width="1.4"/>
<path d="M4,2.4 L16.8,2.4 L13.8,7.4 L4.5,7.4 Z M4.2,4.7 L15.6,4.7 M6.4,2.6 L6.6,7.2 M8.6,2.6 L8.7,7.2 M10.8,2.6 L10.8,7.2 M13,2.6 L12.6,7.2" stroke-width="1"/>
<path d="M4.1,2.4 L4.3,10.4 L15.6,10.4" stroke-width="1.3"/></g>
<rect x="4.4" y="11.2" width="2.2" height="2" fill="#3b86d6"/><rect x="12.6" y="11.2" width="2.2" height="2" fill="#3b86d6"/><rect x="4.6" y="9.8" width="6" height="1.2" fill="#5a9ad8" opacity="0.6"/></svg>
<svg class="a" style="left:377px;top:122px" width="16" height="16" viewBox="0 0 16 16"><circle cx="8" cy="8" r="7" fill="url(#cg)"/><circle cx="8" cy="8" r="6.6" fill="none" stroke="#b5d0e6" stroke-width="0.8"/><rect x="7.1" y="4" width="1.8" height="1.8" fill="#2f63a6"/><rect x="7.1" y="6.8" width="1.8" height="5.4" fill="#2f63a6"/></svg>
<svg class="a" style="left:343px;top:144px" width="12" height="12" viewBox="0 0 12 12"><path d="M6.66,2.05 L7.19,1.04 L8.66,1.65 L8.32,2.74 L9.26,3.68 L10.35,3.34 L10.96,4.81 L9.95,5.34 L9.95,6.66 L10.96,7.19 L10.35,8.66 L9.26,8.32 L8.32,9.26 L8.66,10.35 L7.19,10.96 L6.66,9.95 L5.34,9.95 L4.81,10.96 L3.34,10.35 L3.68,9.26 L2.74,8.32 L1.65,8.66 L1.04,7.19 L2.05,6.66 L2.05,5.34 L1.04,4.81 L1.65,3.34 L2.74,3.68 L3.68,2.74 L3.34,1.65 L4.81,1.04 L5.34,2.05Z" fill="#86b835" stroke="#78a82a" stroke-width="0.3"/><circle cx="6" cy="6" r="2.1" fill="#c8e49a"/><circle cx="6" cy="6" r="1.5" fill="#fff"/></svg>
<svg class="a" style="left:358px;top:143px" width="18" height="14" viewBox="0 0 18 14"><g fill="none" stroke="#44699d" stroke-linejoin="round" stroke-linecap="round">
<path d="M1.2,0.6 L2.6,0.8 L4,2.2" stroke-width="1.4"/>
<path d="M4,2.4 L16.8,2.4 L13.8,7.4 L4.5,7.4 Z M4.2,4.7 L15.6,4.7 M6.4,2.6 L6.6,7.2 M8.6,2.6 L8.7,7.2 M10.8,2.6 L10.8,7.2 M13,2.6 L12.6,7.2" stroke-width="1"/>
<path d="M4.1,2.4 L4.3,10.4 L15.6,10.4" stroke-width="1.3"/></g>
<rect x="4.4" y="11.2" width="2.2" height="2" fill="#3b86d6"/><rect x="12.6" y="11.2" width="2.2" height="2" fill="#3b86d6"/><rect x="4.6" y="9.8" width="6" height="1.2" fill="#5a9ad8" opacity="0.6"/></svg>
<svg class="a" style="left:377px;top:142px" width="16" height="16" viewBox="0 0 16 16"><circle cx="8" cy="8" r="7" fill="url(#cg)"/><circle cx="8" cy="8" r="6.6" fill="none" stroke="#b5d0e6" stroke-width="0.8"/><rect x="7.1" y="4" width="1.8" height="1.8" fill="#2f63a6"/><rect x="7.1" y="6.8" width="1.8" height="5.4" fill="#2f63a6"/></svg>
<svg class="a" style="left:343px;top:164px" width="12" height="12" viewBox="0 0 12 12"><path d="M6.66,2.05 L7.19,1.04 L8.66,1.65 L8.32,2.74 L9.26,3.68 L10.35,3.34 L10.96,4.81 L9.95,5.34 L9.95,6.66 L10.96,7.19 L10.35,8.66 L9.26,8.32 L8.32,9.26 L8.66,10.35 L7.19,10.96 L6.66,9.95 L5.34,9.95 L4.81,10.96 L3.34,10.35 L3.68,9.26 L2.74,8.32 L1.65,8.66 L1.04,7.19 L2.05,6.66 L2.05,5.34 L1.04,4.81 L1.65,3.34 L2.74,3.68 L3.68,2.74 L3.34,1.65 L4.81,1.04 L5.34,2.05Z" fill="#86b835" stroke="#78a82a" stroke-width="0.3"/><circle cx="6" cy="6" r="2.1" fill="#c8e49a"/><circle cx="6" cy="6" r="1.5" fill="#fff"/></svg>
<svg class="a" style="left:358px;top:163px" width="18" height="14" viewBox="0 0 18 14"><g fill="none" stroke="#44699d" stroke-linejoin="round" stroke-linecap="round">
<path d="M1.2,0.6 L2.6,0.8 L4,2.2" stroke-width="1.4"/>
<path d="M4,2.4 L16.8,2.4 L13.8,7.4 L4.5,7.4 Z M4.2,4.7 L15.6,4.7 M6.4,2.6 L6.6,7.2 M8.6,2.6 L8.7,7.2 M10.8,2.6 L10.8,7.2 M13,2.6 L12.6,7.2" stroke-width="1"/>
<path d="M4.1,2.4 L4.3,10.4 L15.6,10.4" stroke-width="1.3"/></g>
<rect x="4.4" y="11.2" width="2.2" height="2" fill="#3b86d6"/><rect x="12.6" y="11.2" width="2.2" height="2" fill="#3b86d6"/><rect x="4.6" y="9.8" width="6" height="1.2" fill="#5a9ad8" opacity="0.6"/></svg>
<svg class="a" style="left:377px;top:162px" width="16" height="16" viewBox="0 0 16 16"><circle cx="8" cy="8" r="7" fill="url(#cg)"/><circle cx="8" cy="8" r="6.6" fill="none" stroke="#b5d0e6" stroke-width="0.8"/><rect x="7.1" y="4" width="1.8" height="1.8" fill="#2f63a6"/><rect x="7.1" y="6.8" width="1.8" height="5.4" fill="#2f63a6"/></svg>
<svg class="a" style="left:343px;top:184px" width="12" height="12" viewBox="0 0 12 12"><path d="M6.66,2.05 L7.19,1.04 L8.66,1.65 L8.32,2.74 L9.26,3.68 L10.35,3.34 L10.96,4.81 L9.95,5.34 L9.95,6.66 L10.96,7.19 L10.35,8.66 L9.26,8.32 L8.32,9.26 L8.66,10.35 L7.19,10.96 L6.66,9.95 L5.34,9.95 L4.81,10.96 L3.34,10.35 L3.68,9.26 L2.74,8.32 L1.65,8.66 L1.04,7.19 L2.05,6.66 L2.05,5.34 L1.04,4.81 L1.65,3.34 L2.74,3.68 L3.68,2.74 L3.34,1.65 L4.81,1.04 L5.34,2.05Z" fill="#86b835" stroke="#78a82a" stroke-width="0.3"/><circle cx="6" cy="6" r="2.1" fill="#c8e49a"/><circle cx="6" cy="6" r="1.5" fill="#fff"/></svg>
<svg class="a" style="left:358px;top:183px" width="18" height="14" viewBox="0 0 18 14"><g fill="none" stroke="#44699d" stroke-linejoin="round" stroke-linecap="round">
<path d="M1.2,0.6 L2.6,0.8 L4,2.2" stroke-width="1.4"/>
<path d="M4,2.4 L16.8,2.4 L13.8,7.4 L4.5,7.4 Z M4.2,4.7 L15.6,4.7 M6.4,2.6 L6.6,7.2 M8.6,2.6 L8.7,7.2 M10.8,2.6 L10.8,7.2 M13,2.6 L12.6,7.2" stroke-width="1"/>
<path d="M4.1,2.4 L4.3,10.4 L15.6,10.4" stroke-width="1.3"/></g>
<rect x="4.4" y="11.2" width="2.2" height="2" fill="#3b86d6"/><rect x="12.6" y="11.2" width="2.2" height="2" fill="#3b86d6"/><rect x="4.6" y="9.8" width="6" height="1.2" fill="#5a9ad8" opacity="0.6"/></svg>
<svg class="a" style="left:377px;top:182px" width="16" height="16" viewBox="0 0 16 16"><circle cx="8" cy="8" r="7" fill="url(#cg)"/><circle cx="8" cy="8" r="6.6" fill="none" stroke="#b5d0e6" stroke-width="0.8"/><rect x="7.1" y="4" width="1.8" height="1.8" fill="#2f63a6"/><rect x="7.1" y="6.8" width="1.8" height="5.4" fill="#2f63a6"/></svg>
<svg class="a" style="left:343px;top:204px" width="12" height="12" viewBox="0 0 12 12"><path d="M6.66,2.05 L7.19,1.04 L8.66,1.65 L8.32,2.74 L9.26,3.68 L10.35,3.34 L10.96,4.81 L9.95,5.34 L9.95,6.66 L10.96,7.19 L10.35,8.66 L9.26,8.32 L8.32,9.26 L8.66,10.35 L7.19,10.96 L6.66,9.95 L5.34,9.95 L4.81,10.96 L3.34,10.35 L3.68,9.26 L2.74,8.32 L1.65,8.66 L1.04,7.19 L2.05,6.66 L2.05,5.34 L1.04,4.81 L1.65,3.34 L2.74,3.68 L3.68,2.74 L3.34,1.65 L4.81,1.04 L5.34,2.05Z" fill="#86b835" stroke="#78a82a" stroke-width="0.3"/><circle cx="6" cy="6" r="2.1" fill="#c8e49a"/><circle cx="6" cy="6" r="1.5" fill="#fff"/></svg>
<svg class="a" style="left:358px;top:203px" width="18" height="14" viewBox="0 0 18 14"><g fill="none" stroke="#44699d" stroke-linejoin="round" stroke-linecap="round">
<path d="M1.2,0.6 L2.6,0.8 L4,2.2" stroke-width="1.4"/>
<path d="M4,2.4 L16.8,2.4 L13.8,7.4 L4.5,7.4 Z M4.2,4.7 L15.6,4.7 M6.4,2.6 L6.6,7.2 M8.6,2.6 L8.7,7.2 M10.8,2.6 L10.8,7.2 M13,2.6 L12.6,7.2" stroke-width="1"/>
<path d="M4.1,2.4 L4.3,10.4 L15.6,10.4" stroke-width="1.3"/></g>
<rect x="4.4" y="11.2" width="2.2" height="2" fill="#3b86d6"/><rect x="12.6" y="11.2" width="2.2" height="2" fill="#3b86d6"/><rect x="4.6" y="9.8" width="6" height="1.2" fill="#5a9ad8" opacity="0.6"/></svg>
<svg class="a" style="left:377px;top:202px" width="16" height="16" viewBox="0 0 16 16"><circle cx="8" cy="8" r="7" fill="url(#cg)"/><circle cx="8" cy="8" r="6.6" fill="none" stroke="#b5d0e6" stroke-width="0.8"/><rect x="7.1" y="4" width="1.8" height="1.8" fill="#2f63a6"/><rect x="7.1" y="6.8" width="1.8" height="5.4" fill="#2f63a6"/></svg>
<svg class="a" style="left:343px;top:224px" width="12" height="12" viewBox="0 0 12 12"><path d="M6.66,2.05 L7.19,1.04 L8.66,1.65 L8.32,2.74 L9.26,3.68 L10.35,3.34 L10.96,4.81 L9.95,5.34 L9.95,6.66 L10.96,7.19 L10.35,8.66 L9.26,8.32 L8.32,9.26 L8.66,10.35 L7.19,10.96 L6.66,9.95 L5.34,9.95 L4.81,10.96 L3.34,10.35 L3.68,9.26 L2.74,8.32 L1.65,8.66 L1.04,7.19 L2.05,6.66 L2.05,5.34 L1.04,4.81 L1.65,3.34 L2.74,3.68 L3.68,2.74 L3.34,1.65 L4.81,1.04 L5.34,2.05Z" fill="#86b835" stroke="#78a82a" stroke-width="0.3"/><circle cx="6" cy="6" r="2.1" fill="#c8e49a"/><circle cx="6" cy="6" r="1.5" fill="#fff"/></svg>
<svg class="a" style="left:358px;top:223px" width="18" height="14" viewBox="0 0 18 14"><g fill="none" stroke="#44699d" stroke-linejoin="round" stroke-linecap="round">
<path d="M1.2,0.6 L2.6,0.8 L4,2.2" stroke-width="1.4"/>
<path d="M4,2.4 L16.8,2.4 L13.8,7.4 L4.5,7.4 Z M4.2,4.7 L15.6,4.7 M6.4,2.6 L6.6,7.2 M8.6,2.6 L8.7,7.2 M10.8,2.6 L10.8,7.2 M13,2.6 L12.6,7.2" stroke-width="1"/>
<path d="M4.1,2.4 L4.3,10.4 L15.6,10.4" stroke-width="1.3"/></g>
<rect x="4.4" y="11.2" width="2.2" height="2" fill="#3b86d6"/><rect x="12.6" y="11.2" width="2.2" height="2" fill="#3b86d6"/><rect x="4.6" y="9.8" width="6" height="1.2" fill="#5a9ad8" opacity="0.6"/></svg>
<svg class="a" style="left:377px;top:222px" width="16" height="16" viewBox="0 0 16 16"><circle cx="8" cy="8" r="7" fill="url(#cg)"/><circle cx="8" cy="8" r="6.6" fill="none" stroke="#b5d0e6" stroke-width="0.8"/><rect x="7.1" y="4" width="1.8" height="1.8" fill="#2f63a6"/><rect x="7.1" y="6.8" width="1.8" height="5.4" fill="#2f63a6"/></svg>
<svg class="a" style="left:343px;top:244px" width="12" height="12" viewBox="0 0 12 12"><path d="M6.66,2.05 L7.19,1.04 L8.66,1.65 L8.32,2.74 L9.26,3.68 L10.35,3.34 L10.96,4.81 L9.95,5.34 L9.95,6.66 L10.96,7.19 L10.35,8.66 L9.26,8.32 L8.32,9.26 L8.66,10.35 L7.19,10.96 L6.66,9.95 L5.34,9.95 L4.81,10.96 L3.34,10.35 L3.68,9.26 L2.74,8.32 L1.65,8.66 L1.04,7.19 L2.05,6.66 L2.05,5.34 L1.04,4.81 L1.65,3.34 L2.74,3.68 L3.68,2.74 L3.34,1.65 L4.81,1.04 L5.34,2.05Z" fill="#86b835" stroke="#78a82a" stroke-width="0.3"/><circle cx="6" cy="6" r="2.1" fill="#c8e49a"/><circle cx="6" cy="6" r="1.5" fill="#fff"/></svg>
<svg class="a" style="left:358px;top:243px" width="18" height="14" viewBox="0 0 18 14"><g fill="none" stroke="#44699d" stroke-linejoin="round" stroke-linecap="round">
<path d="M1.2,0.6 L2.6,0.8 L4,2.2" stroke-width="1.4"/>
<path d="M4,2.4 L16.8,2.4 L13.8,7.4 L4.5,7.4 Z M4.2,4.7 L15.6,4.7 M6.4,2.6 L6.6,7.2 M8.6,2.6 L8.7,7.2 M10.8,2.6 L10.8,7.2 M13,2.6 L12.6,7.2" stroke-width="1"/>
<path d="M4.1,2.4 L4.3,10.4 L15.6,10.4" stroke-width="1.3"/></g>
<rect x="4.4" y="11.2" width="2.2" height="2" fill="#3b86d6"/><rect x="12.6" y="11.2" width="2.2" height="2" fill="#3b86d6"/><rect x="4.6" y="9.8" width="6" height="1.2" fill="#5a9ad8" opacity="0.6"/></svg>
<svg class="a" style="left:377px;top:242px" width="16" height="16" viewBox="0 0 16 16"><circle cx="8" cy="8" r="7" fill="url(#cg)"/><circle cx="8" cy="8" r="6.6" fill="none" stroke="#b5d0e6" stroke-width="0.8"/><rect x="7.1" y="4" width="1.8" height="1.8" fill="#2f63a6"/><rect x="7.1" y="6.8" width="1.8" height="5.4" fill="#2f63a6"/></svg>
<svg class="a" style="left:343px;top:264px" width="12" height="12" viewBox="0 0 12 12"><path d="M6.66,2.05 L7.19,1.04 L8.66,1.65 L8.32,2.74 L9.26,3.68 L10.35,3.34 L10.96,4.81 L9.95,5.34 L9.95,6.66 L10.96,7.19 L10.35,8.66 L9.26,8.32 L8.32,9.26 L8.66,10.35 L7.19,10.96 L6.66,9.95 L5.34,9.95 L4.81,10.96 L3.34,10.35 L3.68,9.26 L2.74,8.32 L1.65,8.66 L1.04,7.19 L2.05,6.66 L2.05,5.34 L1.04,4.81 L1.65,3.34 L2.74,3.68 L3.68,2.74 L3.34,1.65 L4.81,1.04 L5.34,2.05Z" fill="#86b835" stroke="#78a82a" stroke-width="0.3"/><circle cx="6" cy="6" r="2.1" fill="#c8e49a"/><circle cx="6" cy="6" r="1.5" fill="#fff"/></svg>
<svg class="a" style="left:358px;top:263px" width="18" height="14" viewBox="0 0 18 14"><g fill="none" stroke="#44699d" stroke-linejoin="round" stroke-linecap="round">
<path d="M1.2,0.6 L2.6,0.8 L4,2.2" stroke-width="1.4"/>
<path d="M4,2.4 L16.8,2.4 L13.8,7.4 L4.5,7.4 Z M4.2,4.7 L15.6,4.7 M6.4,2.6 L6.6,7.2 M8.6,2.6 L8.7,7.2 M10.8,2.6 L10.8,7.2 M13,2.6 L12.6,7.2" stroke-width="1"/>
<path d="M4.1,2.4 L4.3,10.4 L15.6,10.4" stroke-width="1.3"/></g>
<rect x="4.4" y="11.2" width="2.2" height="2" fill="#3b86d6"/><rect x="12.6" y="11.2" width="2.2" height="2" fill="#3b86d6"/><rect x="4.6" y="9.8" width="6" height="1.2" fill="#5a9ad8" opacity="0.6"/></svg>
<svg class="a" style="left:377px;top:262px" width="16" height="16" viewBox="0 0 16 16"><circle cx="8" cy="8" r="7" fill="url(#cg)"/><circle cx="8" cy="8" r="6.6" fill="none" stroke="#b5d0e6" stroke-width="0.8"/><rect x="7.1" y="4" width="1.8" height="1.8" fill="#2f63a6"/><rect x="7.1" y="6.8" width="1.8" height="5.4" fill="#2f63a6"/></svg>
<svg class="a" style="left:343px;top:284px" width="12" height="12" viewBox="0 0 12 12"><path d="M6.66,2.05 L7.19,1.04 L8.66,1.65 L8.32,2.74 L9.26,3.68 L10.35,3.34 L10.96,4.81 L9.95,5.34 L9.95,6.66 L10.96,7.19 L10.35,8.66 L9.26,8.32 L8.32,9.26 L8.66,10.35 L7.19,10.96 L6.66,9.95 L5.34,9.95 L4.81,10.96 L3.34,10.35 L3.68,9.26 L2.74,8.32 L1.65,8.66 L1.04,7.19 L2.05,6.66 L2.05,5.34 L1.04,4.81 L1.65,3.34 L2.74,3.68 L3.68,2.74 L3.34,1.65 L4.81,1.04 L5.34,2.05Z" fill="#86b835" stroke="#78a82a" stroke-width="0.3"/><circle cx="6" cy="6" r="2.1" fill="#c8e49a"/><circle cx="6" cy="6" r="1.5" fill="#fff"/></svg>
<svg class="a" style="left:358px;top:283px" width="18" height="14" viewBox="0 0 18 14"><g fill="none" stroke="#44699d" stroke-linejoin="round" stroke-linecap="round">
<path d="M1.2,0.6 L2.6,0.8 L4,2.2" stroke-width="1.4"/>
<path d="M4,2.4 L16.8,2.4 L13.8,7.4 L4.5,7.4 Z M4.2,4.7 L15.6,4.7 M6.4,2.6 L6.6,7.2 M8.6,2.6 L8.7,7.2 M10.8,2.6 L10.8,7.2 M13,2.6 L12.6,7.2" stroke-width="1"/>
<path d="M4.1,2.4 L4.3,10.4 L15.6,10.4" stroke-width="1.3"/></g>
<rect x="4.4" y="11.2" width="2.2" height="2" fill="#3b86d6"/><rect x="12.6" y="11.2" width="2.2" height="2" fill="#3b86d6"/><rect x="4.6" y="9.8" width="6" height="1.2" fill="#5a9ad8" opacity="0.6"/></svg>
<svg class="a" style="left:377px;top:282px" width="16" height="16" viewBox="0 0 16 16"><circle cx="8" cy="8" r="7" fill="url(#cg)"/><circle cx="8" cy="8" r="6.6" fill="none" stroke="#b5d0e6" stroke-width="0.8"/><rect x="7.1" y="4" width="1.8" height="1.8" fill="#2f63a6"/><rect x="7.1" y="6.8" width="1.8" height="5.4" fill="#2f63a6"/></svg>
<svg class="a" style="left:343px;top:304px" width="12" height="12" viewBox="0 0 12 12"><path d="M6.66,2.05 L7.19,1.04 L8.66,1.65 L8.32,2.74 L9.26,3.68 L10.35,3.34 L10.96,4.81 L9.95,5.34 L9.95,6.66 L10.96,7.19 L10.35,8.66 L9.26,8.32 L8.32,9.26 L8.66,10.35 L7.19,10.96 L6.66,9.95 L5.34,9.95 L4.81,10.96 L3.34,10.35 L3.68,9.26 L2.74,8.32 L1.65,8.66 L1.04,7.19 L2.05,6.66 L2.05,5.34 L1.04,4.81 L1.65,3.34 L2.74,3.68 L3.68,2.74 L3.34,1.65 L4.81,1.04 L5.34,2.05Z" fill="#86b835" stroke="#78a82a" stroke-width="0.3"/><circle cx="6" cy="6" r="2.1" fill="#c8e49a"/><circle cx="6" cy="6" r="1.5" fill="#fff"/></svg>
<svg class="a" style="left:358px;top:303px" width="18" height="14" viewBox="0 0 18 14"><g fill="none" stroke="#44699d" stroke-linejoin="round" stroke-linecap="round">
<path d="M1.2,0.6 L2.6,0.8 L4,2.2" stroke-width="1.4"/>
<path d="M4,2.4 L16.8,2.4 L13.8,7.4 L4.5,7.4 Z M4.2,4.7 L15.6,4.7 M6.4,2.6 L6.6,7.2 M8.6,2.6 L8.7,7.2 M10.8,2.6 L10.8,7.2 M13,2.6 L12.6,7.2" stroke-width="1"/>
<path d="M4.1,2.4 L4.3,10.4 L15.6,10.4" stroke-width="1.3"/></g>
<rect x="4.4" y="11.2" width="2.2" height="2" fill="#3b86d6"/><rect x="12.6" y="11.2" width="2.2" height="2" fill="#3b86d6"/><rect x="4.6" y="9.8" width="6" height="1.2" fill="#5a9ad8" opacity="0.6"/></svg>
<svg class="a" style="left:377px;top:302px" width="16" height="16" viewBox="0 0 16 16"><circle cx="8" cy="8" r="7" fill="url(#cg)"/><circle cx="8" cy="8" r="6.6" fill="none" stroke="#b5d0e6" stroke-width="0.8"/><rect x="7.1" y="4" width="1.8" height="1.8" fill="#2f63a6"/><rect x="7.1" y="6.8" width="1.8" height="5.4" fill="#2f63a6"/></svg>
<svg class="a" style="left:343px;top:324px" width="12" height="12" viewBox="0 0 12 12"><path d="M6.66,2.05 L7.19,1.04 L8.66,1.65 L8.32,2.74 L9.26,3.68 L10.35,3.34 L10.96,4.81 L9.95,5.34 L9.95,6.66 L10.96,7.19 L10.35,8.66 L9.26,8.32 L8.32,9.26 L8.66,10.35 L7.19,10.96 L6.66,9.95 L5.34,9.95 L4.81,10.96 L3.34,10.35 L3.68,9.26 L2.74,8.32 L1.65,8.66 L1.04,7.19 L2.05,6.66 L2.05,5.34 L1.04,4.81 L1.65,3.34 L2.74,3.68 L3.68,2.74 L3.34,1.65 L4.81,1.04 L5.34,2.05Z" fill="#86b835" stroke="#78a82a" stroke-width="0.3"/><circle cx="6" cy="6" r="2.1" fill="#c8e49a"/><circle cx="6" cy="6" r="1.5" fill="#fff"/></svg>
<svg class="a" style="left:358px;top:323px" width="18" height="14" viewBox="0 0 18 14"><g fill="none" stroke="#44699d" stroke-linejoin="round" stroke-linecap="round">
<path d="M1.2,0.6 L2.6,0.8 L4,2.2" stroke-width="1.4"/>
<path d="M4,2.4 L16.8,2.4 L13.8,7.4 L4.5,7.4 Z M4.2,4.7 L15.6,4.7 M6.4,2.6 L6.6,7.2 M8.6,2.6 L8.7,7.2 M10.8,2.6 L10.8,7.2 M13,2.6 L12.6,7.2" stroke-width="1"/>
<path d="M4.1,2.4 L4.3,10.4 L15.6,10.4" stroke-width="1.3"/></g>
<rect x="4.4" y="11.2" width="2.2" height="2" fill="#3b86d6"/><rect x="12.6" y="11.2" width="2.2" height="2" fill="#3b86d6"/><rect x="4.6" y="9.8" width="6" height="1.2" fill="#5a9ad8" opacity="0.6"/></svg>
<svg class="a" style="left:377px;top:322px" width="16" height="16" viewBox="0 0 16 16"><circle cx="8" cy="8" r="7" fill="url(#cg)"/><circle cx="8" cy="8" r="6.6" fill="none" stroke="#b5d0e6" stroke-width="0.8"/><rect x="7.1" y="4" width="1.8" height="1.8" fill="#2f63a6"/><rect x="7.1" y="6.8" width="1.8" height="5.4" fill="#2f63a6"/></svg>
<svg class="a" style="left:343px;top:344px" width="12" height="12" viewBox="0 0 12 12"><path d="M6.66,2.05 L7.19,1.04 L8.66,1.65 L8.32,2.74 L9.26,3.68 L10.35,3.34 L10.96,4.81 L9.95,5.34 L9.95,6.66 L10.96,7.19 L10.35,8.66 L9.26,8.32 L8.32,9.26 L8.66,10.35 L7.19,10.96 L6.66,9.95 L5.34,9.95 L4.81,10.96 L3.34,10.35 L3.68,9.26 L2.74,8.32 L1.65,8.66 L1.04,7.19 L2.05,6.66 L2.05,5.34 L1.04,4.81 L1.65,3.34 L2.74,3.68 L3.68,2.74 L3.34,1.65 L4.81,1.04 L5.34,2.05Z" fill="#86b835" stroke="#78a82a" stroke-width="0.3"/><circle cx="6" cy="6" r="2.1" fill="#c8e49a"/><circle cx="6" cy="6" r="1.5" fill="#fff"/></svg>
<svg class="a" style="left:358px;top:343px" width="18" height="14" viewBox="0 0 18 14"><g fill="none" stroke="#44699d" stroke-linejoin="round" stroke-linecap="round">
<path d="M1.2,0.6 L2.6,0.8 L4,2.2" stroke-width="1.4"/>
<path d="M4,2.4 L16.8,2.4 L13.8,7.4 L4.5,7.4 Z M4.2,4.7 L15.6,4.7 M6.4,2.6 L6.6,7.2 M8.6,2.6 L8.7,7.2 M10.8,2.6 L10.8,7.2 M13,2.6 L12.6,7.2" stroke-width="1"/>
<path d="M4.1,2.4 L4.3,10.4 L15.6,10.4" stroke-width="1.3"/></g>
<rect x="4.4" y="11.2" width="2.2" height="2" fill="#3b86d6"/><rect x="12.6" y="11.2" width="2.2" height="2" fill="#3b86d6"/><rect x="4.6" y="9.8" width="6" height="1.2" fill="#5a9ad8" opacity="0.6"/></svg>
<svg class="a" style="left:377px;top:342px" width="16" height="16" viewBox="0 0 16 16"><circle cx="8" cy="8" r="7" fill="url(#cg)"/><circle cx="8" cy="8" r="6.6" fill="none" stroke="#b5d0e6" stroke-width="0.8"/><rect x="7.1" y="4" width="1.8" height="1.8" fill="#2f63a6"/><rect x="7.1" y="6.8" width="1.8" height="5.4" fill="#2f63a6"/></svg>
<svg class="a" style="left:343px;top:364px" width="12" height="12" viewBox="0 0 12 12"><path d="M6.66,2.05 L7.19,1.04 L8.66,1.65 L8.32,2.74 L9.26,3.68 L10.35,3.34 L10.96,4.81 L9.95,5.34 L9.95,6.66 L10.96,7.19 L10.35,8.66 L9.26,8.32 L8.32,9.26 L8.66,10.35 L7.19,10.96 L6.66,9.95 L5.34,9.95 L4.81,10.96 L3.34,10.35 L3.68,9.26 L2.74,8.32 L1.65,8.66 L1.04,7.19 L2.05,6.66 L2.05,5.34 L1.04,4.81 L1.65,3.34 L2.74,3.68 L3.68,2.74 L3.34,1.65 L4.81,1.04 L5.34,2.05Z" fill="#86b835" stroke="#78a82a" stroke-width="0.3"/><circle cx="6" cy="6" r="2.1" fill="#c8e49a"/><circle cx="6" cy="6" r="1.5" fill="#fff"/></svg>
<svg class="a" style="left:358px;top:363px" width="18" height="14" viewBox="0 0 18 14"><g fill="none" stroke="#44699d" stroke-linejoin="round" stroke-linecap="round">
<path d="M1.2,0.6 L2.6,0.8 L4,2.2" stroke-width="1.4"/>
<path d="M4,2.4 L16.8,2.4 L13.8,7.4 L4.5,7.4 Z M4.2,4.7 L15.6,4.7 M6.4,2.6 L6.6,7.2 M8.6,2.6 L8.7,7.2 M10.8,2.6 L10.8,7.2 M13,2.6 L12.6,7.2" stroke-width="1"/>
<path d="M4.1,2.4 L4.3,10.4 L15.6,10.4" stroke-width="1.3"/></g>
<rect x="4.4" y="11.2" width="2.2" height="2" fill="#3b86d6"/><rect x="12.6" y="11.2" width="2.2" height="2" fill="#3b86d6"/><rect x="4.6" y="9.8" width="6" height="1.2" fill="#5a9ad8" opacity="0.6"/></svg>
<svg class="a" style="left:377px;top:362px" width="16" height="16" viewBox="0 0 16 16"><circle cx="8" cy="8" r="7" fill="url(#cg)"/><circle cx="8" cy="8" r="6.6" fill="none" stroke="#b5d0e6" stroke-width="0.8"/><rect x="7.1" y="4" width="1.8" height="1.8" fill="#2f63a6"/><rect x="7.1" y="6.8" width="1.8" height="5.4" fill="#2f63a6"/></svg>
<svg class="a" style="left:343px;top:384px" width="12" height="12" viewBox="0 0 12 12"><path d="M6.66,2.05 L7.19,1.04 L8.66,1.65 L8.32,2.74 L9.26,3.68 L10.35,3.34 L10.96,4.81 L9.95,5.34 L9.95,6.66 L10.96,7.19 L10.35,8.66 L9.26,8.32 L8.32,9.26 L8.66,10.35 L7.19,10.96 L6.66,9.95 L5.34,9.95 L4.81,10.96 L3.34,10.35 L3.68,9.26 L2.74,8.32 L1.65,8.66 L1.04,7.19 L2.05,6.66 L2.05,5.34 L1.04,4.81 L1.65,3.34 L2.74,3.68 L3.68,2.74 L3.34,1.65 L4.81,1.04 L5.34,2.05Z" fill="#86b835" stroke="#78a82a" stroke-width="0.3"/><circle cx="6" cy="6" r="2.1" fill="#c8e49a"/><circle cx="6" cy="6" r="1.5" fill="#fff"/></svg>
<svg class="a" style="left:358px;top:383px" width="18" height="14" viewBox="0 0 18 14"><g fill="none" stroke="#44699d" stroke-linejoin="round" stroke-linecap="round">
<path d="M1.2,0.6 L2.6,0.8 L4,2.2" stroke-width="1.4"/>
<path d="M4,2.4 L16.8,2.4 L13.8,7.4 L4.5,7.4 Z M4.2,4.7 L15.6,4.7 M6.4,2.6 L6.6,7.2 M8.6,2.6 L8.7,7.2 M10.8,2.6 L10.8,7.2 M13,2.6 L12.6,7.2" stroke-width="1"/>
<path d="M4.1,2.4 L4.3,10.4 L15.6,10.4" stroke-width="1.3"/></g>
<rect x="4.4" y="11.2" width="2.2" height="2" fill="#3b86d6"/><rect x="12.6" y="11.2" width="2.2" height="2" fill="#3b86d6"/><rect x="4.6" y="9.8" width="6" height="1.2" fill="#5a9ad8" opacity="0.6"/></svg>
<svg class="a" style="left:377px;top:382px" width="16" height="16" viewBox="0 0 16 16"><circle cx="8" cy="8" r="7" fill="url(#cg)"/><circle cx="8" cy="8" r="6.6" fill="none" stroke="#b5d0e6" stroke-width="0.8"/><rect x="7.1" y="4" width="1.8" height="1.8" fill="#2f63a6"/><rect x="7.1" y="6.8" width="1.8" height="5.4" fill="#2f63a6"/></svg>
<svg class="a" style="left:343px;top:404px" width="12" height="12" viewBox="0 0 12 12"><path d="M6.66,2.05 L7.19,1.04 L8.66,1.65 L8.32,2.74 L9.26,3.68 L10.35,3.34 L10.96,4.81 L9.95,5.34 L9.95,6.66 L10.96,7.19 L10.35,8.66 L9.26,8.32 L8.32,9.26 L8.66,10.35 L7.19,10.96 L6.66,9.95 L5.34,9.95 L4.81,10.96 L3.34,10.35 L3.68,9.26 L2.74,8.32 L1.65,8.66 L1.04,7.19 L2.05,6.66 L2.05,5.34 L1.04,4.81 L1.65,3.34 L2.74,3.68 L3.68,2.74 L3.34,1.65 L4.81,1.04 L5.34,2.05Z" fill="#86b835" stroke="#78a82a" stroke-width="0.3"/><circle cx="6" cy="6" r="2.1" fill="#c8e49a"/><circle cx="6" cy="6" r="1.5" fill="#fff"/></svg>
<svg class="a" style="left:358px;top:403px" width="18" height="14" viewBox="0 0 18 14"><g fill="none" stroke="#44699d" stroke-linejoin="round" stroke-linecap="round">
<path d="M1.2,0.6 L2.6,0.8 L4,2.2" stroke-width="1.4"/>
<path d="M4,2.4 L16.8,2.4 L13.8,7.4 L4.5,7.4 Z M4.2,4.7 L15.6,4.7 M6.4,2.6 L6.6,7.2 M8.6,2.6 L8.7,7.2 M10.8,2.6 L10.8,7.2 M13,2.6 L12.6,7.2" stroke-width="1"/>
<path d="M4.1,2.4 L4.3,10.4 L15.6,10.4" stroke-width="1.3"/></g>
<rect x="4.4" y="11.2" width="2.2" height="2" fill="#3b86d6"/><rect x="12.6" y="11.2" width="2.2" height="2" fill="#3b86d6"/><rect x="4.6" y="9.8" width="6" height="1.2" fill="#5a9ad8" opacity="0.6"/></svg>
<svg class="a" style="left:377px;top:402px" width="16" height="16" viewBox="0 0 16 16"><circle cx="8" cy="8" r="7" fill="url(#cg)"/><circle cx="8" cy="8" r="6.6" fill="none" stroke="#b5d0e6" stroke-width="0.8"/><rect x="7.1" y="4" width="1.8" height="1.8" fill="#2f63a6"/><rect x="7.1" y="6.8" width="1.8" height="5.4" fill="#2f63a6"/></svg>
<svg class="a" style="left:343px;top:424px" width="12" height="12" viewBox="0 0 12 12"><path d="M6.66,2.05 L7.19,1.04 L8.66,1.65 L8.32,2.74 L9.26,3.68 L10.35,3.34 L10.96,4.81 L9.95,5.34 L9.95,6.66 L10.96,7.19 L10.35,8.66 L9.26,8.32 L8.32,9.26 L8.66,10.35 L7.19,10.96 L6.66,9.95 L5.34,9.95 L4.81,10.96 L3.34,10.35 L3.68,9.26 L2.74,8.32 L1.65,8.66 L1.04,7.19 L2.05,6.66 L2.05,5.34 L1.04,4.81 L1.65,3.34 L2.74,3.68 L3.68,2.74 L3.34,1.65 L4.81,1.04 L5.34,2.05Z" fill="#86b835" stroke="#78a82a" stroke-width="0.3"/><circle cx="6" cy="6" r="2.1" fill="#c8e49a"/><circle cx="6" cy="6" r="1.5" fill="#fff"/></svg>
<svg class="a" style="left:358px;top:423px" width="18" height="14" viewBox="0 0 18 14"><g fill="none" stroke="#44699d" stroke-linejoin="round" stroke-linecap="round">
<path d="M1.2,0.6 L2.6,0.8 L4,2.2" stroke-width="1.4"/>
<path d="M4,2.4 L16.8,2.4 L13.8,7.4 L4.5,7.4 Z M4.2,4.7 L15.6,4.7 M6.4,2.6 L6.6,7.2 M8.6,2.6 L8.7,7.2 M10.8,2.6 L10.8,7.2 M13,2.6 L12.6,7.2" stroke-width="1"/>
<path d="M4.1,2.4 L4.3,10.4 L15.6,10.4" stroke-width="1.3"/></g>
<rect x="4.4" y="11.2" width="2.2" height="2" fill="#3b86d6"/><rect x="12.6" y="11.2" width="2.2" height="2" fill="#3b86d6"/><rect x="4.6" y="9.8" width="6" height="1.2" fill="#5a9ad8" opacity="0.6"/></svg>
<svg class="a" style="left:377px;top:422px" width="16" height="16" viewBox="0 0 16 16"><circle cx="8" cy="8" r="7" fill="url(#cg)"/><circle cx="8" cy="8" r="6.6" fill="none" stroke="#b5d0e6" stroke-width="0.8"/><rect x="7.1" y="4" width="1.8" height="1.8" fill="#2f63a6"/><rect x="7.1" y="6.8" width="1.8" height="5.4" fill="#2f63a6"/></svg>
<svg class="a" style="left:343px;top:444px" width="12" height="12" viewBox="0 0 12 12"><path d="M6.66,2.05 L7.19,1.04 L8.66,1.65 L8.32,2.74 L9.26,3.68 L10.35,3.34 L10.96,4.81 L9.95,5.34 L9.95,6.66 L10.96,7.19 L10.35,8.66 L9.26,8.32 L8.32,9.26 L8.66,10.35 L7.19,10.96 L6.66,9.95 L5.34,9.95 L4.81,10.96 L3.34,10.35 L3.68,9.26 L2.74,8.32 L1.65,8.66 L1.04,7.19 L2.05,6.66 L2.05,5.34 L1.04,4.81 L1.65,3.34 L2.74,3.68 L3.68,2.74 L3.34,1.65 L4.81,1.04 L5.34,2.05Z" fill="#86b835" stroke="#78a82a" stroke-width="0.3"/><circle cx="6" cy="6" r="2.1" fill="#c8e49a"/><circle cx="6" cy="6" r="1.5" fill="#fff"/></svg>
<svg class="a" style="left:358px;top:443px" width="18" height="14" viewBox="0 0 18 14"><g fill="none" stroke="#44699d" stroke-linejoin="round" stroke-linecap="round">
<path d="M1.2,0.6 L2.6,0.8 L4,2.2" stroke-width="1.4"/>
<path d="M4,2.4 L16.8,2.4 L13.8,7.4 L4.5,7.4 Z M4.2,4.7 L15.6,4.7 M6.4,2.6 L6.6,7.2 M8.6,2.6 L8.7,7.2 M10.8,2.6 L10.8,7.2 M13,2.6 L12.6,7.2" stroke-width="1"/>
<path d="M4.1,2.4 L4.3,10.4 L15.6,10.4" stroke-width="1.3"/></g>
<rect x="4.4" y="11.2" width="2.2" height="2" fill="#3b86d6"/><rect x="12.6" y="11.2" width="2.2" height="2" fill="#3b86d6"/><rect x="4.6" y="9.8" width="6" height="1.2" fill="#5a9ad8" opacity="0.6"/></svg>
<svg class="a" style="left:377px;top:442px" width="16" height="16" viewBox="0 0 16 16"><circle cx="8" cy="8" r="7" fill="url(#cg)"/><circle cx="8" cy="8" r="6.6" fill="none" stroke="#b5d0e6" stroke-width="0.8"/>
<path d="M10.6,5.2 Q10,3.7 8,3.7 Q5.4,3.7 5.4,5.7 Q5.4,7.3 8,7.9 Q10.7,8.5 10.7,10.3 Q10.7,12.4 8,12.4 Q5.6,12.4 5.2,10.6" fill="none" stroke="#1a5a9c" stroke-width="2"/></svg>
<svg class="a" style="left:395px;top:442px" width="16" height="16" viewBox="0 0 16 16"><circle cx="8" cy="8" r="7" fill="url(#cg)"/><circle cx="8" cy="8" r="6.6" fill="none" stroke="#b5d0e6" stroke-width="0.8"/><rect x="7.1" y="4" width="1.8" height="1.8" fill="#2f63a6"/><rect x="7.1" y="6.8" width="1.8" height="5.4" fill="#2f63a6"/></svg>
<svg class="a" style="left:420px;top:442px" width="18" height="16" viewBox="0 0 18 16"><path d="M1.3,2.8 L1.3,14 M16.3,2.8 L16.3,14" stroke="#7d7b4a" stroke-width="1.2"/>
<path d="M2.3,2.4 L2.3,13.2 Q5.5,12.6 8.8,13.8 Q12,12.6 15.3,13.2 L15.3,2.4 Q12,1.8 8.8,3.2 Q5.5,1.8 2.3,2.4Z" fill="#fdfdfd" stroke="#8e8e8e" stroke-width="0.7"/>
<path d="M2.6,13.4 Q5.5,12.8 8.8,14.2 Q12,12.8 15,13.4" fill="none" stroke="#555" stroke-width="0.8"/>
<path d="M3.6,1.2 L5.8,1.2 M12.2,1.2 L14.4,1.2" stroke="#7d7b4a" stroke-width="1.1"/>
<ellipse cx="9.6" cy="6.8" rx="3.1" ry="3.7" fill="none" stroke="#2a2a2a" stroke-width="1"/><path d="M11.6,9.8 L15.6,14.4" stroke="#1e1e1e" stroke-width="1.4"/></svg>
<svg class="a" style="left:343px;top:464px" width="12" height="12" viewBox="0 0 12 12"><path d="M6.66,2.05 L7.19,1.04 L8.66,1.65 L8.32,2.74 L9.26,3.68 L10.35,3.34 L10.96,4.81 L9.95,5.34 L9.95,6.66 L10.96,7.19 L10.35,8.66 L9.26,8.32 L8.32,9.26 L8.66,10.35 L7.19,10.96 L6.66,9.95 L5.34,9.95 L4.81,10.96 L3.34,10.35 L3.68,9.26 L2.74,8.32 L1.65,8.66 L1.04,7.19 L2.05,6.66 L2.05,5.34 L1.04,4.81 L1.65,3.34 L2.74,3.68 L3.68,2.74 L3.34,1.65 L4.81,1.04 L5.34,2.05Z" fill="#86b835" stroke="#78a82a" stroke-width="0.3"/><circle cx="6" cy="6" r="2.1" fill="#c8e49a"/><circle cx="6" cy="6" r="1.5" fill="#fff"/></svg>
<svg class="a" style="left:358px;top:463px" width="18" height="14" viewBox="0 0 18 14"><g fill="none" stroke="#44699d" stroke-linejoin="round" stroke-linecap="round">
<path d="M1.2,0.6 L2.6,0.8 L4,2.2" stroke-width="1.4"/>
<path d="M4,2.4 L16.8,2.4 L13.8,7.4 L4.5,7.4 Z M4.2,4.7 L15.6,4.7 M6.4,2.6 L6.6,7.2 M8.6,2.6 L8.7,7.2 M10.8,2.6 L10.8,7.2 M13,2.6 L12.6,7.2" stroke-width="1"/>
<path d="M4.1,2.4 L4.3,10.4 L15.6,10.4" stroke-width="1.3"/></g>
<rect x="4.4" y="11.2" width="2.2" height="2" fill="#3b86d6"/><rect x="12.6" y="11.2" width="2.2" height="2" fill="#3b86d6"/><rect x="4.6" y="9.8" width="6" height="1.2" fill="#5a9ad8" opacity="0.6"/></svg>
<svg class="a" style="left:377px;top:462px" width="16" height="16" viewBox="0 0 16 16"><circle cx="8" cy="8" r="7" fill="url(#cg)"/><circle cx="8" cy="8" r="6.6" fill="none" stroke="#b5d0e6" stroke-width="0.8"/><rect x="7.1" y="4" width="1.8" height="1.8" fill="#2f63a6"/><rect x="7.1" y="6.8" width="1.8" height="5.4" fill="#2f63a6"/></svg>
<svg class="a" style="left:343px;top:484px" width="12" height="12" viewBox="0 0 12 12"><path d="M6.66,2.05 L7.19,1.04 L8.66,1.65 L8.32,2.74 L9.26,3.68 L10.35,3.34 L10.96,4.81 L9.95,5.34 L9.95,6.66 L10.96,7.19 L10.35,8.66 L9.26,8.32 L8.32,9.26 L8.66,10.35 L7.19,10.96 L6.66,9.95 L5.34,9.95 L4.81,10.96 L3.34,10.35 L3.68,9.26 L2.74,8.32 L1.65,8.66 L1.04,7.19 L2.05,6.66 L2.05,5.34 L1.04,4.81 L1.65,3.34 L2.74,3.68 L3.68,2.74 L3.34,1.65 L4.81,1.04 L5.34,2.05Z" fill="#86b835" stroke="#78a82a" stroke-width="0.3"/><circle cx="6" cy="6" r="2.1" fill="#c8e49a"/><circle cx="6" cy="6" r="1.5" fill="#fff"/></svg>
<svg class="a" style="left:358px;top:483px" width="18" height="14" viewBox="0 0 18 14"><g fill="none" stroke="#44699d" stroke-linejoin="round" stroke-linecap="round">
<path d="M1.2,0.6 L2.6,0.8 L4,2.2" stroke-width="1.4"/>
<path d="M4,2.4 L16.8,2.4 L13.8,7.4 L4.5,7.4 Z M4.2,4.7 L15.6,4.7 M6.4,2.6 L6.6,7.2 M8.6,2.6 L8.7,7.2 M10.8,2.6 L10.8,7.2 M13,2.6 L12.6,7.2" stroke-width="1"/>
<path d="M4.1,2.4 L4.3,10.4 L15.6,10.4" stroke-width="1.3"/></g>
<rect x="4.4" y="11.2" width="2.2" height="2" fill="#3b86d6"/><rect x="12.6" y="11.2" width="2.2" height="2" fill="#3b86d6"/><rect x="4.6" y="9.8" width="6" height="1.2" fill="#5a9ad8" opacity="0.6"/></svg>
<svg class="a" style="left:377px;top:482px" width="16" height="16" viewBox="0 0 16 16"><circle cx="8" cy="8" r="7" fill="url(#cg)"/><circle cx="8" cy="8" r="6.6" fill="none" stroke="#b5d0e6" stroke-width="0.8"/><rect x="7.1" y="4" width="1.8" height="1.8" fill="#2f63a6"/><rect x="7.1" y="6.8" width="1.8" height="5.4" fill="#2f63a6"/></svg>
<svg class="a" style="left:343px;top:504px" width="12" height="12" viewBox="0 0 12 12"><path d="M6.66,2.05 L7.19,1.04 L8.66,1.65 L8.32,2.74 L9.26,3.68 L10.35,3.34 L10.96,4.81 L9.95,5.34 L9.95,6.66 L10.96,7.19 L10.35,8.66 L9.26,8.32 L8.32,9.26 L8.66,10.35 L7.19,10.96 L6.66,9.95 L5.34,9.95 L4.81,10.96 L3.34,10.35 L3.68,9.26 L2.74,8.32 L1.65,8.66 L1.04,7.19 L2.05,6.66 L2.05,5.34 L1.04,4.81 L1.65,3.34 L2.74,3.68 L3.68,2.74 L3.34,1.65 L4.81,1.04 L5.34,2.05Z" fill="#86b835" stroke="#78a82a" stroke-width="0.3"/><circle cx="6" cy="6" r="2.1" fill="#c8e49a"/><circle cx="6" cy="6" r="1.5" fill="#fff"/></svg>
<svg class="a" style="left:358px;top:503px" width="18" height="14" viewBox="0 0 18 14"><g fill="none" stroke="#44699d" stroke-linejoin="round" stroke-linecap="round">
<path d="M1.2,0.6 L2.6,0.8 L4,2.2" stroke-width="1.4"/>
<path d="M4,2.4 L16.8,2.4 L13.8,7.4 L4.5,7.4 Z M4.2,4.7 L15.6,4.7 M6.4,2.6 L6.6,7.2 M8.6,2.6 L8.7,7.2 M10.8,2.6 L10.8,7.2 M13,2.6 L12.6,7.2" stroke-width="1"/>
<path d="M4.1,2.4 L4.3,10.4 L15.6,10.4" stroke-width="1.3"/></g>
<rect x="4.4" y="11.2" width="2.2" height="2" fill="#3b86d6"/><rect x="12.6" y="11.2" width="2.2" height="2" fill="#3b86d6"/><rect x="4.6" y="9.8" width="6" height="1.2" fill="#5a9ad8" opacity="0.6"/></svg>
<svg class="a" style="left:377px;top:502px" width="16" height="16" viewBox="0 0 16 16"><circle cx="8" cy="8" r="7" fill="url(#cg)"/><circle cx="8" cy="8" r="6.6" fill="none" stroke="#b5d0e6" stroke-width="0.8"/><rect x="7.1" y="4" width="1.8" height="1.8" fill="#2f63a6"/><rect x="7.1" y="6.8" width="1.8" height="5.4" fill="#2f63a6"/></svg>
<svg class="a" style="left:343px;top:524px" width="12" height="12" viewBox="0 0 12 12"><path d="M6.66,2.05 L7.19,1.04 L8.66,1.65 L8.32,2.74 L9.26,3.68 L10.35,3.34 L10.96,4.81 L9.95,5.34 L9.95,6.66 L10.96,7.19 L10.35,8.66 L9.26,8.32 L8.32,9.26 L8.66,10.35 L7.19,10.96 L6.66,9.95 L5.34,9.95 L4.81,10.96 L3.34,10.35 L3.68,9.26 L2.74,8.32 L1.65,8.66 L1.04,7.19 L2.05,6.66 L2.05,5.34 L1.04,4.81 L1.65,3.34 L2.74,3.68 L3.68,2.74 L3.34,1.65 L4.81,1.04 L5.34,2.05Z" fill="#86b835" stroke="#78a82a" stroke-width="0.3"/><circle cx="6" cy="6" r="2.1" fill="#c8e49a"/><circle cx="6" cy="6" r="1.5" fill="#fff"/></svg>
<svg class="a" style="left:358px;top:523px" width="18" height="14" viewBox="0 0 18 14"><g fill="none" stroke="#44699d" stroke-linejoin="round" stroke-linecap="round">
<path d="M1.2,0.6 L2.6,0.8 L4,2.2" stroke-width="1.4"/>
<path d="M4,2.4 L16.8,2.4 L13.8,7.4 L4.5,7.4 Z M4.2,4.7 L15.6,4.7 M6.4,2.6 L6.6,7.2 M8.6,2.6 L8.7,7.2 M10.8,2.6 L10.8,7.2 M13,2.6 L12.6,7.2" stroke-width="1"/>
<path d="M4.1,2.4 L4.3,10.4 L15.6,10.4" stroke-width="1.3"/></g>
<rect x="4.4" y="11.2" width="2.2" height="2" fill="#3b86d6"/><rect x="12.6" y="11.2" width="2.2" height="2" fill="#3b86d6"/><rect x="4.6" y="9.8" width="6" height="1.2" fill="#5a9ad8" opacity="0.6"/></svg>
<svg class="a" style="left:377px;top:522px" width="16" height="16" viewBox="0 0 16 16"><circle cx="8" cy="8" r="7" fill="url(#cg)"/><circle cx="8" cy="8" r="6.6" fill="none" stroke="#b5d0e6" stroke-width="0.8"/><rect x="7.1" y="4" width="1.8" height="1.8" fill="#2f63a6"/><rect x="7.1" y="6.8" width="1.8" height="5.4" fill="#2f63a6"/></svg>
<svg class="a" style="left:343px;top:544px" width="12" height="12" viewBox="0 0 12 12"><path d="M6.66,2.05 L7.19,1.04 L8.66,1.65 L8.32,2.74 L9.26,3.68 L10.35,3.34 L10.96,4.81 L9.95,5.34 L9.95,6.66 L10.96,7.19 L10.35,8.66 L9.26,8.32 L8.32,9.26 L8.66,10.35 L7.19,10.96 L6.66,9.95 L5.34,9.95 L4.81,10.96 L3.34,10.35 L3.68,9.26 L2.74,8.32 L1.65,8.66 L1.04,7.19 L2.05,6.66 L2.05,5.34 L1.04,4.81 L1.65,3.34 L2.74,3.68 L3.68,2.74 L3.34,1.65 L4.81,1.04 L5.34,2.05Z" fill="#86b835" stroke="#78a82a" stroke-width="0.3"/><circle cx="6" cy="6" r="2.1" fill="#c8e49a"/><circle cx="6" cy="6" r="1.5" fill="#fff"/></svg>
<svg class="a" style="left:358px;top:543px" width="18" height="14" viewBox="0 0 18 14"><g fill="none" stroke="#44699d" stroke-linejoin="round" stroke-linecap="round">
<path d="M1.2,0.6 L2.6,0.8 L4,2.2" stroke-width="1.4"/>
<path d="M4,2.4 L16.8,2.4 L13.8,7.4 L4.5,7.4 Z M4.2,4.7 L15.6,4.7 M6.4,2.6 L6.6,7.2 M8.6,2.6 L8.7,7.2 M10.8,2.6 L10.8,7.2 M13,2.6 L12.6,7.2" stroke-width="1"/>
<path d="M4.1,2.4 L4.3,10.4 L15.6,10.4" stroke-width="1.3"/></g>
<rect x="4.4" y="11.2" width="2.2" height="2" fill="#3b86d6"/><rect x="12.6" y="11.2" width="2.2" height="2" fill="#3b86d6"/><rect x="4.6" y="9.8" width="6" height="1.2" fill="#5a9ad8" opacity="0.6"/></svg>
<svg class="a" style="left:377px;top:542px" width="16" height="16" viewBox="0 0 16 16"><circle cx="8" cy="8" r="7" fill="url(#cg)"/><circle cx="8" cy="8" r="6.6" fill="none" stroke="#b5d0e6" stroke-width="0.8"/><rect x="7.1" y="4" width="1.8" height="1.8" fill="#2f63a6"/><rect x="7.1" y="6.8" width="1.8" height="5.4" fill="#2f63a6"/></svg>
<svg class="a" style="left:343px;top:564px" width="12" height="12" viewBox="0 0 12 12"><path d="M6.66,2.05 L7.19,1.04 L8.66,1.65 L8.32,2.74 L9.26,3.68 L10.35,3.34 L10.96,4.81 L9.95,5.34 L9.95,6.66 L10.96,7.19 L10.35,8.66 L9.26,8.32 L8.32,9.26 L8.66,10.35 L7.19,10.96 L6.66,9.95 L5.34,9.95 L4.81,10.96 L3.34,10.35 L3.68,9.26 L2.74,8.32 L1.65,8.66 L1.04,7.19 L2.05,6.66 L2.05,5.34 L1.04,4.81 L1.65,3.34 L2.74,3.68 L3.68,2.74 L3.34,1.65 L4.81,1.04 L5.34,2.05Z" fill="#86b835" stroke="#78a82a" stroke-width="0.3"/><circle cx="6" cy="6" r="2.1" fill="#c8e49a"/><circle cx="6" cy="6" r="1.5" fill="#fff"/></svg>
<svg class="a" style="left:358px;top:563px" width="18" height="14" viewBox="0 0 18 14"><g fill="none" stroke="#44699d" stroke-linejoin="round" stroke-linecap="round">
<path d="M1.2,0.6 L2.6,0.8 L4,2.2" stroke-width="1.4"/>
<path d="M4,2.4 L16.8,2.4 L13.8,7.4 L4.5,7.4 Z M4.2,4.7 L15.6,4.7 M6.4,2.6 L6.6,7.2 M8.6,2.6 L8.7,7.2 M10.8,2.6 L10.8,7.2 M13,2.6 L12.6,7.2" stroke-width="1"/>
<path d="M4.1,2.4 L4.3,10.4 L15.6,10.4" stroke-width="1.3"/></g>
<rect x="4.4" y="11.2" width="2.2" height="2" fill="#3b86d6"/><rect x="12.6" y="11.2" width="2.2" height="2" fill="#3b86d6"/><rect x="4.6" y="9.8" width="6" height="1.2" fill="#5a9ad8" opacity="0.6"/></svg>
<svg class="a" style="left:377px;top:562px" width="16" height="16" viewBox="0 0 16 16"><circle cx="8" cy="8" r="7" fill="url(#cg)"/><circle cx="8" cy="8" r="6.6" fill="none" stroke="#b5d0e6" stroke-width="0.8"/><rect x="7.1" y="4" width="1.8" height="1.8" fill="#2f63a6"/><rect x="7.1" y="6.8" width="1.8" height="5.4" fill="#2f63a6"/></svg>
<svg class="a" style="left:343px;top:584px" width="12" height="12" viewBox="0 0 12 12"><path d="M6.66,2.05 L7.19,1.04 L8.66,1.65 L8.32,2.74 L9.26,3.68 L10.35,3.34 L10.96,4.81 L9.95,5.34 L9.95,6.66 L10.96,7.19 L10.35,8.66 L9.26,8.32 L8.32,9.26 L8.66,10.35 L7.19,10.96 L6.66,9.95 L5.34,9.95 L4.81,10.96 L3.34,10.35 L3.68,9.26 L2.74,8.32 L1.65,8.66 L1.04,7.19 L2.05,6.66 L2.05,5.34 L1.04,4.81 L1.65,3.34 L2.74,3.68 L3.68,2.74 L3.34,1.65 L4.81,1.04 L5.34,2.05Z" fill="#86b835" stroke="#78a82a" stroke-width="0.3"/><circle cx="6" cy="6" r="2.1" fill="#c8e49a"/><circle cx="6" cy="6" r="1.5" fill="#fff"/></svg>
<svg class="a" style="left:358px;top:583px" width="18" height="14" viewBox="0 0 18 14"><g fill="none" stroke="#44699d" stroke-linejoin="round" stroke-linecap="round">
<path d="M1.2,0.6 L2.6,0.8 L4,2.2" stroke-width="1.4"/>
<path d="M4,2.4 L16.8,2.4 L13.8,7.4 L4.5,7.4 Z M4.2,4.7 L15.6,4.7 M6.4,2.6 L6.6,7.2 M8.6,2.6 L8.7,7.2 M10.8,2.6 L10.8,7.2 M13,2.6 L12.6,7.2" stroke-width="1"/>
<path d="M4.1,2.4 L4.3,10.4 L15.6,10.4" stroke-width="1.3"/></g>
<rect x="4.4" y="11.2" width="2.2" height="2" fill="#3b86d6"/><rect x="12.6" y="11.2" width="2.2" height="2" fill="#3b86d6"/><rect x="4.6" y="9.8" width="6" height="1.2" fill="#5a9ad8" opacity="0.6"/></svg>
<svg class="a" style="left:377px;top:582px" width="16" height="16" viewBox="0 0 16 16"><circle cx="8" cy="8" r="7" fill="url(#cg)"/><circle cx="8" cy="8" r="6.6" fill="none" stroke="#b5d0e6" stroke-width="0.8"/><rect x="7.1" y="4" width="1.8" height="1.8" fill="#2f63a6"/><rect x="7.1" y="6.8" width="1.8" height="5.4" fill="#2f63a6"/></svg>
<svg class="a" style="left:343px;top:604px" width="12" height="12" viewBox="0 0 12 12"><path d="M6.66,2.05 L7.19,1.04 L8.66,1.65 L8.32,2.74 L9.26,3.68 L10.35,3.34 L10.96,4.81 L9.95,5.34 L9.95,6.66 L10.96,7.19 L10.35,8.66 L9.26,8.32 L8.32,9.26 L8.66,10.35 L7.19,10.96 L6.66,9.95 L5.34,9.95 L4.81,10.96 L3.34,10.35 L3.68,9.26 L2.74,8.32 L1.65,8.66 L1.04,7.19 L2.05,6.66 L2.05,5.34 L1.04,4.81 L1.65,3.34 L2.74,3.68 L3.68,2.74 L3.34,1.65 L4.81,1.04 L5.34,2.05Z" fill="#86b835" stroke="#78a82a" stroke-width="0.3"/><circle cx="6" cy="6" r="2.1" fill="#c8e49a"/><circle cx="6" cy="6" r="1.5" fill="#fff"/></svg>
<svg class="a" style="left:358px;top:603px" width="18" height="14" viewBox="0 0 18 14"><g fill="none" stroke="#44699d" stroke-linejoin="round" stroke-linecap="round">
<path d="M1.2,0.6 L2.6,0.8 L4,2.2" stroke-width="1.4"/>
<path d="M4,2.4 L16.8,2.4 L13.8,7.4 L4.5,7.4 Z M4.2,4.7 L15.6,4.7 M6.4,2.6 L6.6,7.2 M8.6,2.6 L8.7,7.2 M10.8,2.6 L10.8,7.2 M13,2.6 L12.6,7.2" stroke-width="1"/>
<path d="M4.1,2.4 L4.3,10.4 L15.6,10.4" stroke-width="1.3"/></g>
<rect x="4.4" y="11.2" width="2.2" height="2" fill="#3b86d6"/><rect x="12.6" y="11.2" width="2.2" height="2" fill="#3b86d6"/><rect x="4.6" y="9.8" width="6" height="1.2" fill="#5a9ad8" opacity="0.6"/></svg>
<svg class="a" style="left:377px;top:602px" width="16" height="16" viewBox="0 0 16 16"><circle cx="8" cy="8" r="7" fill="url(#cg)"/><circle cx="8" cy="8" r="6.6" fill="none" stroke="#b5d0e6" stroke-width="0.8"/><rect x="7.1" y="4" width="1.8" height="1.8" fill="#2f63a6"/><rect x="7.1" y="6.8" width="1.8" height="5.4" fill="#2f63a6"/></svg>
<svg class="a" style="left:343px;top:624px" width="12" height="12" viewBox="0 0 12 12"><path d="M6.66,2.05 L7.19,1.04 L8.66,1.65 L8.32,2.74 L9.26,3.68 L10.35,3.34 L10.96,4.81 L9.95,5.34 L9.95,6.66 L10.96,7.19 L10.35,8.66 L9.26,8.32 L8.32,9.26 L8.66,10.35 L7.19,10.96 L6.66,9.95 L5.34,9.95 L4.81,10.96 L3.34,10.35 L3.68,9.26 L2.74,8.32 L1.65,8.66 L1.04,7.19 L2.05,6.66 L2.05,5.34 L1.04,4.81 L1.65,3.34 L2.74,3.68 L3.68,2.74 L3.34,1.65 L4.81,1.04 L5.34,2.05Z" fill="#9cc21e"/><circle cx="6" cy="6" r="1.6" fill="#3399ff"/></svg>
<svg class="a" style="left:358px;top:623px" width="18" height="14" viewBox="0 0 18 14"><g fill="none" stroke="#62789a" stroke-linejoin="round" stroke-linecap="round">
<path d="M1.2,0.6 L2.6,0.8 L4,2.2" stroke-width="1.3"/>
<path d="M4,2.4 L16.8,2.4 L13.8,7.4 L4.5,7.4 Z M4.2,4.7 L15.6,4.7 M6.4,2.6 L6.6,7.2 M8.6,2.6 L8.7,7.2 M10.8,2.6 L10.8,7.2 M13,2.6 L12.6,7.2" stroke-width="1"/>
<path d="M4.1,2.4 L4.3,10.4 L15.6,10.4" stroke-width="1.2"/></g>
<rect x="4.4" y="11.2" width="2" height="1.8" fill="#6f9ac0"/><rect x="12.6" y="11.2" width="2" height="1.8" fill="#6f9ac0"/></svg>
<svg class="a" style="left:377px;top:622px" width="16" height="16" viewBox="0 0 16 16"><circle cx="8" cy="8" r="7" fill="url(#cg)"/><circle cx="8" cy="8" r="6.6" fill="none" stroke="#b5d0e6" stroke-width="0.8"/><rect x="7.1" y="4" width="1.8" height="1.8" fill="#2f63a6"/><rect x="7.1" y="6.8" width="1.8" height="5.4" fill="#2f63a6"/></svg>
<svg class="a" style="left:343px;top:644px" width="12" height="12" viewBox="0 0 12 12"><path d="M6.66,2.05 L7.19,1.04 L8.66,1.65 L8.32,2.74 L9.26,3.68 L10.35,3.34 L10.96,4.81 L9.95,5.34 L9.95,6.66 L10.96,7.19 L10.35,8.66 L9.26,8.32 L8.32,9.26 L8.66,10.35 L7.19,10.96 L6.66,9.95 L5.34,9.95 L4.81,10.96 L3.34,10.35 L3.68,9.26 L2.74,8.32 L1.65,8.66 L1.04,7.19 L2.05,6.66 L2.05,5.34 L1.04,4.81 L1.65,3.34 L2.74,3.68 L3.68,2.74 L3.34,1.65 L4.81,1.04 L5.34,2.05Z" fill="#86b835" stroke="#78a82a" stroke-width="0.3"/><circle cx="6" cy="6" r="2.1" fill="#c8e49a"/><circle cx="6" cy="6" r="1.5" fill="#fff"/></svg>
<svg class="a" style="left:358px;top:643px" width="18" height="14" viewBox="0 0 18 14"><g fill="none" stroke="#44699d" stroke-linejoin="round" stroke-linecap="round">
<path d="M1.2,0.6 L2.6,0.8 L4,2.2" stroke-width="1.4"/>
<path d="M4,2.4 L16.8,2.4 L13.8,7.4 L4.5,7.4 Z M4.2,4.7 L15.6,4.7 M6.4,2.6 L6.6,7.2 M8.6,2.6 L8.7,7.2 M10.8,2.6 L10.8,7.2 M13,2.6 L12.6,7.2" stroke-width="1"/>
<path d="M4.1,2.4 L4.3,10.4 L15.6,10.4" stroke-width="1.3"/></g>
<rect x="4.4" y="11.2" width="2.2" height="2" fill="#3b86d6"/><rect x="12.6" y="11.2" width="2.2" height="2" fill="#3b86d6"/><rect x="4.6" y="9.8" width="6" height="1.2" fill="#5a9ad8" opacity="0.6"/></svg>
<svg class="a" style="left:377px;top:642px" width="16" height="16" viewBox="0 0 16 16"><circle cx="8" cy="8" r="7" fill="url(#cg)"/><circle cx="8" cy="8" r="6.6" fill="none" stroke="#b5d0e6" stroke-width="0.8"/>
<path d="M10.6,5.2 Q10,3.7 8,3.7 Q5.4,3.7 5.4,5.7 Q5.4,7.3 8,7.9 Q10.7,8.5 10.7,10.3 Q10.7,12.4 8,12.4 Q5.6,12.4 5.2,10.6" fill="none" stroke="#1a5a9c" stroke-width="2"/></svg>
<svg class="a" style="left:395px;top:642px" width="16" height="16" viewBox="0 0 16 16"><circle cx="8" cy="8" r="7" fill="url(#cg)"/><circle cx="8" cy="8" r="6.6" fill="none" stroke="#b5d0e6" stroke-width="0.8"/><rect x="7.1" y="4" width="1.8" height="1.8" fill="#2f63a6"/><rect x="7.1" y="6.8" width="1.8" height="5.4" fill="#2f63a6"/></svg>
<svg class="a" style="left:420px;top:642px" width="18" height="16" viewBox="0 0 18 16"><path d="M1.3,2.8 L1.3,14 M16.3,2.8 L16.3,14" stroke="#7d7b4a" stroke-width="1.2"/>
<path d="M2.3,2.4 L2.3,13.2 Q5.5,12.6 8.8,13.8 Q12,12.6 15.3,13.2 L15.3,2.4 Q12,1.8 8.8,3.2 Q5.5,1.8 2.3,2.4Z" fill="#fdfdfd" stroke="#8e8e8e" stroke-width="0.7"/>
<path d="M2.6,13.4 Q5.5,12.8 8.8,14.2 Q12,12.8 15,13.4" fill="none" stroke="#555" stroke-width="0.8"/>
<path d="M3.6,1.2 L5.8,1.2 M12.2,1.2 L14.4,1.2" stroke="#7d7b4a" stroke-width="1.1"/>
<ellipse cx="9.6" cy="6.8" rx="3.1" ry="3.7" fill="none" stroke="#2a2a2a" stroke-width="1"/><path d="M11.6,9.8 L15.6,14.4" stroke="#1e1e1e" stroke-width="1.4"/></svg>
<svg width="0" height="0" style="position:absolute">
<defs>
<radialGradient id="cg" cx="45%" cy="40%" r="60%"><stop offset="0" stop-color="#fafcfe"/><stop offset="0.55" stop-color="#e2edf6"/><stop offset="1" stop-color="#9cc0de"/></radialGradient>
<radialGradient id="cgs" cx="45%" cy="40%" r="60%"><stop offset="0" stop-color="#ffffff"/><stop offset="0.55" stop-color="#e8eef3"/><stop offset="1" stop-color="#a8c2d6"/></radialGradient>







</defs></svg>
<div class="a" style="left:1027px;top:624px;width:43px;height:50px;background:#fff"></div>
<svg class="a" style="left:1027px;top:624px" width="43" height="50" viewBox="1027 624 43 50">
<g fill="none" stroke="#0d4e92" stroke-width="2.9">
<circle cx="1038.7" cy="634.2" r="6.9"/>
<circle cx="1054.7" cy="634.2" r="6.9"/>
<circle cx="1038.7" cy="650.6" r="6.9"/>
<circle cx="1054.7" cy="650.6" r="6.9"/>
</g>
<g fill="none" stroke="#0d4e92" stroke-width="2.5">
<path d="M1034.2,638.9 L1043.2,629.5 M1050.2,629.5 L1059.2,638.9 M1034.2,645.9 L1043.2,655.3 M1050.2,655.3 L1059.2,645.9"/>
</g>
<g fill="#0d4e92"><path d="M1046.7,625.2 L1048.3,628.5 L1046.7,632 L1045.1,628.5Z M1046.7,652.8 L1048.3,656.3 L1046.7,659.6 L1045.1,656.3Z M1030.2,642.4 L1033,640.8 L1035.8,642.4 L1033,644Z M1057.6,642.4 L1060.4,640.8 L1063.2,642.4 L1060.4,644Z"/></g>
<text x="1028.6" y="671.5" font-family="Liberation Sans" font-weight="bold" font-size="11" fill="#0d4e92" letter-spacing="-0.45" stroke="#0d4e92" stroke-width="0.25">Perkins</text>
<circle cx="1066.8" cy="664.2" r="0.9" fill="#6b8fb8"/>
</svg>

<div class="a" style="left:338px;top:672px;width:689px;height:1px;background:#efefe6"></div><div class="a" style="left:356px;top:673px;width:603px;height:1px;background:#a6a6b2"></div><div class="a" style="left:959px;top:673px;width:68px;height:1px;background:#e4e4ec"></div>
</body></html>
